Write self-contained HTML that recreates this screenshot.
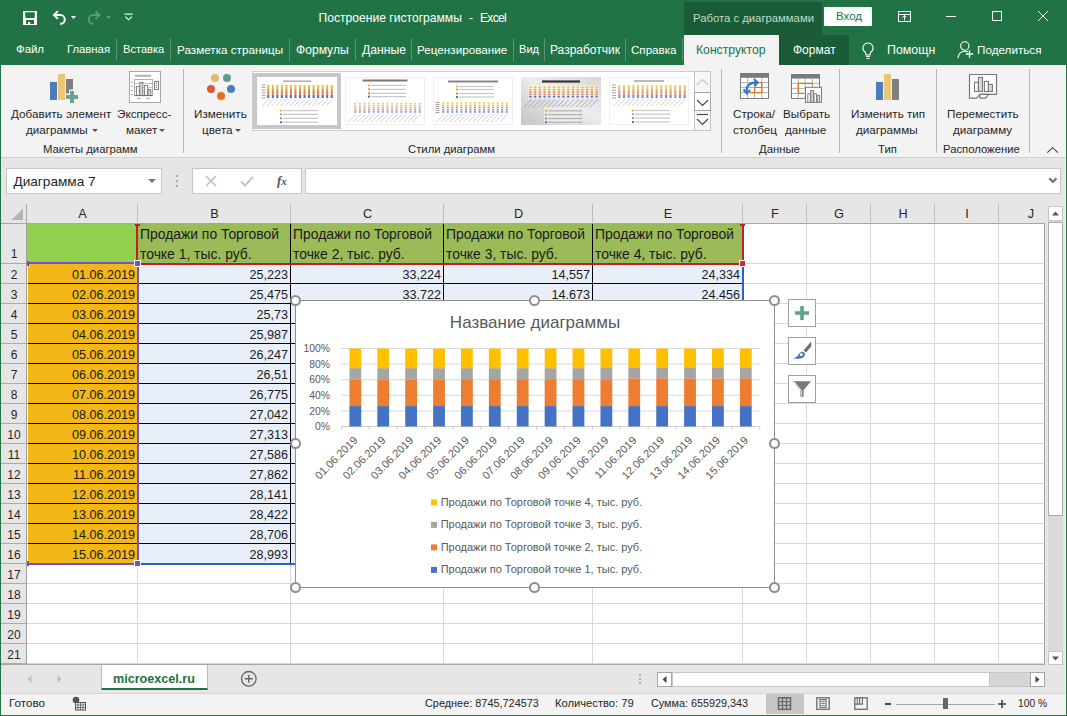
<!DOCTYPE html>
<html><head><meta charset="utf-8">
<style>
*{margin:0;padding:0;box-sizing:border-box}
html,body{width:1067px;height:716px;overflow:hidden;background:#e6e6e6;font-family:"Liberation Sans",sans-serif;position:relative}
.a{position:absolute}
.t{position:absolute;white-space:pre;line-height:1}
.tab{color:#fff;font-size:11.7px;top:44px}
.sep{position:absolute;top:38px;width:1px;height:23px;background:#5a9573}
.rl{font-size:11.7px;color:#262626}
.gl{font-size:11.3px;color:#262626;top:143.5px}
.vsep{position:absolute;top:69px;width:1px;height:84px;background:#b9b9b9}
.dd{position:absolute;width:0;height:0;border-left:3px solid transparent;border-right:3px solid transparent;border-top:3px solid #555}
</style></head><body>
<!-- ===== title bar ===== -->
<div class="a" style="left:0;top:0;width:1067px;height:65px;background:#217346"></div>
<div class="a" style="left:684px;top:2px;width:138px;height:33px;background:#1a5c37"></div>
<div class="t" style="left:318.6px;top:12px;font-size:12.1px;color:#fff">Построение гистограммы</div><div class="t" style="left:469px;top:12px;font-size:12.1px;color:#fff">-</div><div class="t" style="left:480px;top:12px;font-size:12.1px;letter-spacing:-0.7px;color:#fff">Excel</div>
<div class="t" style="left:693px;top:13px;font-size:11.3px;color:#c0dac9">Работа с диаграммами</div>
<div class="a" style="left:824px;top:7px;width:48px;height:19px;background:#fff;border-radius:1px"></div>
<div class="t" style="left:836px;top:11px;font-size:11.5px;color:#217346">Вход</div>
<!-- qat icons -->
<svg class="a" style="left:20px;top:8px" width="120" height="20" viewBox="0 0 120 20">
 <path fill-rule="evenodd" fill="#fff" d="M3 3h14v14H3z M5.2 4.2h9.6v5l-0.7 0.7h-8.2l-0.7-0.7z M6 12h8v3.9h-3.9v-1.9h-2v1.9H6z"/>
 <g fill="none" stroke="#fff" stroke-width="2"><path d="M34 7.1H40.5a4.3 4.3 0 0 1 0 8.6h-0.4"/><path d="M37.9 3.3L34 7.1l3.9 3.8"/></g>
 <path d="M51 8.1h5l-2.5 2.9z" fill="#fff"/>
 <g fill="none" stroke="#5c9874" stroke-width="2"><path d="M79.5 7.1H73a4.3 4.3 0 0 0 0 8.6h0.4"/><path d="M75.6 3.3L79.5 7.1l-3.9 3.8"/></g>
 <path d="M86 8.1h5l-2.5 2.9z" fill="#5c9874"/>
 <path d="M104.5 6.1h8.2" stroke="#fff" stroke-width="1.1"/><path d="M105.3 8.6l3.3 3.2 3.3-3.2" fill="none" stroke="#fff" stroke-width="1.1"/>
</svg>
<!-- window buttons -->
<svg class="a" style="left:890px;top:6px" width="170" height="22" viewBox="0 0 170 22">
 <g fill="none" stroke="#fff" stroke-width="1">
  <rect x="8.5" y="5.5" width="12" height="10"/><path d="M8.5 8.5h12"/><path d="M14.5 14.5v-5M12.5 11.5l2-2 2 2"/>
  <path d="M56 10.5h10"/>
  <rect x="102.5" y="5.5" width="9" height="9"/>
  <path d="M148 5l10 10M158 5l-10 10"/>
 </g>
</svg>
<!-- ===== tabs ===== -->
<div class="t tab" style="left:16px;font-size:11.4px">Файл</div>
<div class="t tab" style="left:67px;font-size:11.3px">Главная</div>
<div class="sep" style="left:116px"></div>
<div class="t tab" style="left:123px;font-size:11.1px">Вставка</div>
<div class="sep" style="left:170px"></div>
<div class="t tab" style="left:177px;font-size:11.7px">Разметка страницы</div>
<div class="sep" style="left:289px"></div>
<div class="t tab" style="left:296px;font-size:12.1px">Формулы</div>
<div class="sep" style="left:355px"></div>
<div class="t tab" style="left:362px;font-size:12.2px">Данные</div>
<div class="sep" style="left:411px"></div>
<div class="t tab" style="left:417px;font-size:11.7px">Рецензирование</div>
<div class="sep" style="left:513px"></div>
<div class="t tab" style="left:519px;font-size:11.1px">Вид</div>
<div class="sep" style="left:544px"></div>
<div class="t tab" style="left:550px;font-size:12px">Разработчик</div>
<div class="sep" style="left:625px"></div>
<div class="t tab" style="left:631px;font-size:11.6px">Справка</div>
<div class="sep" style="left:682px"></div>
<div class="a" style="left:684px;top:35px;width:95px;height:30px;background:#f3f3f3"></div>
<div class="t tab" style="left:696px;color:#217346;font-size:12.2px;top:43.5px">Конструктор</div>
<div class="a" style="left:779px;top:35px;width:70px;height:30px;background:#1a5c37"></div>
<div class="t tab" style="left:793px;font-size:12px">Формат</div>
<svg class="a" style="left:860px;top:41px" width="16" height="20" viewBox="0 0 16 20"><g fill="none" stroke="#fff" stroke-width="1.1"><path d="M8 2a5 5 0 0 0-3 9c1 1 1 2 1 3h4c0-1 0-2 1-3a5 5 0 0 0-3-9z"/><path d="M6 15.5h4M6.5 17.5h3"/></g></svg>
<div class="t tab" style="left:887px;font-size:12.4px;top:43.5px">Помощн</div>
<svg class="a" style="left:956px;top:41px" width="20" height="20" viewBox="0 0 20 20"><g fill="none" stroke="#fff" stroke-width="1.1"><circle cx="8.8" cy="5" r="4.2"/><path d="M2 17c0.5-4 3-6.8 7-6.8 1.2 0 2.2.2 3 .6"/><path d="M13.5 9.3v7.4M9.8 13h7.4" stroke-width="1.3"/></g></svg>
<div class="t tab" style="left:977px">Поделиться</div>

<!--GRID-->
<div class="a" style="left:1px;top:158px;width:1064px;height:507px;background:#e6e6e6"></div>
<div class="a" style="left:6px;top:168px;width:156px;height:26px;background:#fff;border:1px solid #c6c6c6"></div>
<div class="t" style="left:13.5px;top:175px;font-size:13.6px;color:#262626">Диаграмма 7</div>
<div class="dd" style="left:148px;top:179px;border-left-width:4px;border-right-width:4px;border-top:4px solid #777"></div>
<svg class="a" style="left:175px;top:174px" width="5" height="14"><circle cx="2" cy="2" r="1.1" fill="#9a9a9a"/><circle cx="2" cy="7" r="1.1" fill="#9a9a9a"/><circle cx="2" cy="12" r="1.1" fill="#9a9a9a"/></svg>
<div class="a" style="left:192px;top:168px;width:110px;height:26px;background:#fff;border:1px solid #c6c6c6"></div>
<svg class="a" style="left:200px;top:172px" width="100" height="18" viewBox="0 0 100 18"><path d="M6 4l10 10M16 4L6 14" stroke="#b8b8b8" stroke-width="1.4"/><path d="M41 9.5l4 4 8-8.5" fill="none" stroke="#c4c4c4" stroke-width="2"/></svg>
<div class="t" style="left:277px;top:174px;font-size:13px;font-family:'Liberation Serif';font-style:italic;font-weight:bold;color:#555">f<span style="font-size:11px">x</span></div>
<div class="a" style="left:305px;top:168px;width:756px;height:26px;background:#fff;border:1px solid #c6c6c6"></div>
<svg class="a" style="left:1048px;top:177px" width="10" height="7"><path d="M1.3 1.3l3.6 3.6 3.6-3.6" fill="none" stroke="#6a6a6a" stroke-width="2"/></svg>
<div class="a" style="left:1px;top:204px;width:1044px;height:20px;background:#e6e6e6;border-bottom:1px solid #a6a6a6"></div>
<div class="a" style="left:1px;top:224px;width:26px;height:441px;background:#e6e6e6;border-right:1px solid #9f9f9f"></div>
<svg class="a" style="left:11px;top:208px" width="13" height="13"><path d="M12 0.5V12H0.5z" fill="#b4b4b4"/></svg>
<div class="a" style="left:26px;top:204px;width:1px;height:20px;background:#a6a6a6"></div>
<div class="t" style="left:27px;top:208px;width:111px;text-align:center;font-size:12.7px;color:#262626">A</div>
<div class="a" style="left:137px;top:204px;width:1px;height:19px;background:#bdbdbd"></div>
<div class="t" style="left:138px;top:208px;width:153px;text-align:center;font-size:12.7px;color:#262626">B</div>
<div class="a" style="left:290px;top:204px;width:1px;height:19px;background:#bdbdbd"></div>
<div class="t" style="left:291px;top:208px;width:153px;text-align:center;font-size:12.7px;color:#262626">C</div>
<div class="a" style="left:443px;top:204px;width:1px;height:19px;background:#bdbdbd"></div>
<div class="t" style="left:444px;top:208px;width:149px;text-align:center;font-size:12.7px;color:#262626">D</div>
<div class="a" style="left:592px;top:204px;width:1px;height:19px;background:#bdbdbd"></div>
<div class="t" style="left:593px;top:208px;width:150px;text-align:center;font-size:12.7px;color:#262626">E</div>
<div class="a" style="left:742px;top:204px;width:1px;height:19px;background:#bdbdbd"></div>
<div class="t" style="left:743px;top:208px;width:64px;text-align:center;font-size:12.7px;color:#262626">F</div>
<div class="a" style="left:806px;top:204px;width:1px;height:19px;background:#bdbdbd"></div>
<div class="t" style="left:807px;top:208px;width:64px;text-align:center;font-size:12.7px;color:#262626">G</div>
<div class="a" style="left:870px;top:204px;width:1px;height:19px;background:#bdbdbd"></div>
<div class="t" style="left:871px;top:208px;width:64px;text-align:center;font-size:12.7px;color:#262626">H</div>
<div class="a" style="left:934px;top:204px;width:1px;height:19px;background:#bdbdbd"></div>
<div class="t" style="left:935px;top:208px;width:64px;text-align:center;font-size:12.7px;color:#262626">I</div>
<div class="a" style="left:998px;top:204px;width:1px;height:19px;background:#bdbdbd"></div>
<div class="t" style="left:999px;top:208px;width:64px;text-align:center;font-size:12.7px;color:#262626">J</div>
<div class="a" style="left:27px;top:224px;width:1018px;height:441px;background:#fff"></div>
<div class="a" style="left:27px;top:263px;width:1018px;height:1px;background:#d9d9d9"></div>
<div class="a" style="left:27px;top:283px;width:1018px;height:1px;background:#d9d9d9"></div>
<div class="a" style="left:27px;top:303px;width:1018px;height:1px;background:#d9d9d9"></div>
<div class="a" style="left:27px;top:323px;width:1018px;height:1px;background:#d9d9d9"></div>
<div class="a" style="left:27px;top:343px;width:1018px;height:1px;background:#d9d9d9"></div>
<div class="a" style="left:27px;top:363px;width:1018px;height:1px;background:#d9d9d9"></div>
<div class="a" style="left:27px;top:383px;width:1018px;height:1px;background:#d9d9d9"></div>
<div class="a" style="left:27px;top:403px;width:1018px;height:1px;background:#d9d9d9"></div>
<div class="a" style="left:27px;top:423px;width:1018px;height:1px;background:#d9d9d9"></div>
<div class="a" style="left:27px;top:443px;width:1018px;height:1px;background:#d9d9d9"></div>
<div class="a" style="left:27px;top:463px;width:1018px;height:1px;background:#d9d9d9"></div>
<div class="a" style="left:27px;top:483px;width:1018px;height:1px;background:#d9d9d9"></div>
<div class="a" style="left:27px;top:503px;width:1018px;height:1px;background:#d9d9d9"></div>
<div class="a" style="left:27px;top:523px;width:1018px;height:1px;background:#d9d9d9"></div>
<div class="a" style="left:27px;top:543px;width:1018px;height:1px;background:#d9d9d9"></div>
<div class="a" style="left:27px;top:563px;width:1018px;height:1px;background:#d9d9d9"></div>
<div class="a" style="left:27px;top:583px;width:1018px;height:1px;background:#d9d9d9"></div>
<div class="a" style="left:27px;top:603px;width:1018px;height:1px;background:#d9d9d9"></div>
<div class="a" style="left:27px;top:623px;width:1018px;height:1px;background:#d9d9d9"></div>
<div class="a" style="left:27px;top:643px;width:1018px;height:1px;background:#d9d9d9"></div>
<div class="a" style="left:27px;top:663px;width:1018px;height:1px;background:#d9d9d9"></div>
<div class="a" style="left:137px;top:224px;width:1px;height:441px;background:#d9d9d9"></div>
<div class="a" style="left:290px;top:224px;width:1px;height:441px;background:#d9d9d9"></div>
<div class="a" style="left:443px;top:224px;width:1px;height:441px;background:#d9d9d9"></div>
<div class="a" style="left:592px;top:224px;width:1px;height:441px;background:#d9d9d9"></div>
<div class="a" style="left:742px;top:224px;width:1px;height:441px;background:#d9d9d9"></div>
<div class="a" style="left:806px;top:224px;width:1px;height:441px;background:#d9d9d9"></div>
<div class="a" style="left:870px;top:224px;width:1px;height:441px;background:#d9d9d9"></div>
<div class="a" style="left:934px;top:224px;width:1px;height:441px;background:#d9d9d9"></div>
<div class="a" style="left:998px;top:224px;width:1px;height:441px;background:#d9d9d9"></div>
<div class="a" style="left:1044px;top:224px;width:1px;height:441px;background:#a6a6a6"></div>
<div class="a" style="left:1px;top:263px;width:25px;height:1px;background:#ababab"></div>
<div class="t" style="left:1px;top:248px;width:26px;text-align:center;font-size:12px;color:#262626">1</div>
<div class="a" style="left:1px;top:283px;width:25px;height:1px;background:#ababab"></div>
<div class="t" style="left:1px;top:269px;width:26px;text-align:center;font-size:12px;color:#262626">2</div>
<div class="a" style="left:1px;top:303px;width:25px;height:1px;background:#ababab"></div>
<div class="t" style="left:1px;top:289px;width:26px;text-align:center;font-size:12px;color:#262626">3</div>
<div class="a" style="left:1px;top:323px;width:25px;height:1px;background:#ababab"></div>
<div class="t" style="left:1px;top:309px;width:26px;text-align:center;font-size:12px;color:#262626">4</div>
<div class="a" style="left:1px;top:343px;width:25px;height:1px;background:#ababab"></div>
<div class="t" style="left:1px;top:329px;width:26px;text-align:center;font-size:12px;color:#262626">5</div>
<div class="a" style="left:1px;top:363px;width:25px;height:1px;background:#ababab"></div>
<div class="t" style="left:1px;top:349px;width:26px;text-align:center;font-size:12px;color:#262626">6</div>
<div class="a" style="left:1px;top:383px;width:25px;height:1px;background:#ababab"></div>
<div class="t" style="left:1px;top:369px;width:26px;text-align:center;font-size:12px;color:#262626">7</div>
<div class="a" style="left:1px;top:403px;width:25px;height:1px;background:#ababab"></div>
<div class="t" style="left:1px;top:389px;width:26px;text-align:center;font-size:12px;color:#262626">8</div>
<div class="a" style="left:1px;top:423px;width:25px;height:1px;background:#ababab"></div>
<div class="t" style="left:1px;top:409px;width:26px;text-align:center;font-size:12px;color:#262626">9</div>
<div class="a" style="left:1px;top:443px;width:25px;height:1px;background:#ababab"></div>
<div class="t" style="left:1px;top:429px;width:26px;text-align:center;font-size:12px;color:#262626">10</div>
<div class="a" style="left:1px;top:463px;width:25px;height:1px;background:#ababab"></div>
<div class="t" style="left:1px;top:449px;width:26px;text-align:center;font-size:12px;color:#262626">11</div>
<div class="a" style="left:1px;top:483px;width:25px;height:1px;background:#ababab"></div>
<div class="t" style="left:1px;top:469px;width:26px;text-align:center;font-size:12px;color:#262626">12</div>
<div class="a" style="left:1px;top:503px;width:25px;height:1px;background:#ababab"></div>
<div class="t" style="left:1px;top:489px;width:26px;text-align:center;font-size:12px;color:#262626">13</div>
<div class="a" style="left:1px;top:523px;width:25px;height:1px;background:#ababab"></div>
<div class="t" style="left:1px;top:509px;width:26px;text-align:center;font-size:12px;color:#262626">14</div>
<div class="a" style="left:1px;top:543px;width:25px;height:1px;background:#ababab"></div>
<div class="t" style="left:1px;top:529px;width:26px;text-align:center;font-size:12px;color:#262626">15</div>
<div class="a" style="left:1px;top:563px;width:25px;height:1px;background:#ababab"></div>
<div class="t" style="left:1px;top:549px;width:26px;text-align:center;font-size:12px;color:#262626">16</div>
<div class="a" style="left:1px;top:583px;width:25px;height:1px;background:#ababab"></div>
<div class="t" style="left:1px;top:569px;width:26px;text-align:center;font-size:12px;color:#262626">17</div>
<div class="a" style="left:1px;top:603px;width:25px;height:1px;background:#ababab"></div>
<div class="t" style="left:1px;top:589px;width:26px;text-align:center;font-size:12px;color:#262626">18</div>
<div class="a" style="left:1px;top:623px;width:25px;height:1px;background:#ababab"></div>
<div class="t" style="left:1px;top:609px;width:26px;text-align:center;font-size:12px;color:#262626">19</div>
<div class="a" style="left:1px;top:643px;width:25px;height:1px;background:#ababab"></div>
<div class="t" style="left:1px;top:629px;width:26px;text-align:center;font-size:12px;color:#262626">20</div>
<div class="a" style="left:1px;top:663px;width:25px;height:1px;background:#ababab"></div>
<div class="t" style="left:1px;top:649px;width:26px;text-align:center;font-size:12px;color:#262626">21</div>
<div class="a" style="left:1px;top:664px;width:1064px;height:1px;background:#a6a6a6"></div>
<div class="a" style="left:27px;top:224px;width:110px;height:40px;background:#92d050"></div>
<div class="a" style="left:138px;top:224px;width:604px;height:40px;background:#9bbb59"></div>
<div class="a" style="left:28px;top:264px;width:109px;height:300px;background:#f4b718"></div>
<div class="a" style="left:138px;top:264px;width:604px;height:300px;background:#e9eff8"></div>
<div class="a" style="left:290px;top:224px;width:1px;height:340px;background:#000"></div>
<div class="a" style="left:443px;top:224px;width:1px;height:340px;background:#000"></div>
<div class="a" style="left:592px;top:224px;width:1px;height:340px;background:#000"></div>
<div class="a" style="left:28px;top:283px;width:715px;height:1px;background:#000"></div>
<div class="a" style="left:28px;top:303px;width:715px;height:1px;background:#000"></div>
<div class="a" style="left:28px;top:323px;width:715px;height:1px;background:#000"></div>
<div class="a" style="left:28px;top:343px;width:715px;height:1px;background:#000"></div>
<div class="a" style="left:28px;top:363px;width:715px;height:1px;background:#000"></div>
<div class="a" style="left:28px;top:383px;width:715px;height:1px;background:#000"></div>
<div class="a" style="left:28px;top:403px;width:715px;height:1px;background:#000"></div>
<div class="a" style="left:28px;top:423px;width:715px;height:1px;background:#000"></div>
<div class="a" style="left:28px;top:443px;width:715px;height:1px;background:#000"></div>
<div class="a" style="left:28px;top:463px;width:715px;height:1px;background:#000"></div>
<div class="a" style="left:28px;top:483px;width:715px;height:1px;background:#000"></div>
<div class="a" style="left:28px;top:503px;width:715px;height:1px;background:#000"></div>
<div class="a" style="left:28px;top:523px;width:715px;height:1px;background:#000"></div>
<div class="a" style="left:28px;top:543px;width:715px;height:1px;background:#000"></div>
<div class="t" style="left:140px;top:225px;font-size:13.9px;color:#1a1a1a;line-height:19.6px">Продажи по Торговой<br>точке 1, тыс. руб.</div>
<div class="t" style="left:293px;top:225px;font-size:13.9px;color:#1a1a1a;line-height:19.6px">Продажи по Торговой<br>точке 2, тыс. руб.</div>
<div class="t" style="left:446px;top:225px;font-size:13.9px;color:#1a1a1a;line-height:19.6px">Продажи по Торговой<br>точке 3, тыс. руб.</div>
<div class="t" style="left:595px;top:225px;font-size:13.9px;color:#1a1a1a;line-height:19.6px">Продажи по Торговой<br>точке 4, тыс. руб.</div>
<div class="t" style="left:27px;top:269px;width:108px;text-align:right;font-size:12.6px;color:#1a1a1a">01.06.2019</div>
<div class="t" style="left:138px;top:269px;width:150px;text-align:right;font-size:12.6px;color:#1a1a1a">25,223</div>
<div class="t" style="left:27px;top:289px;width:108px;text-align:right;font-size:12.6px;color:#1a1a1a">02.06.2019</div>
<div class="t" style="left:138px;top:289px;width:150px;text-align:right;font-size:12.6px;color:#1a1a1a">25,475</div>
<div class="t" style="left:27px;top:309px;width:108px;text-align:right;font-size:12.6px;color:#1a1a1a">03.06.2019</div>
<div class="t" style="left:138px;top:309px;width:150px;text-align:right;font-size:12.6px;color:#1a1a1a">25,73</div>
<div class="t" style="left:27px;top:329px;width:108px;text-align:right;font-size:12.6px;color:#1a1a1a">04.06.2019</div>
<div class="t" style="left:138px;top:329px;width:150px;text-align:right;font-size:12.6px;color:#1a1a1a">25,987</div>
<div class="t" style="left:27px;top:349px;width:108px;text-align:right;font-size:12.6px;color:#1a1a1a">05.06.2019</div>
<div class="t" style="left:138px;top:349px;width:150px;text-align:right;font-size:12.6px;color:#1a1a1a">26,247</div>
<div class="t" style="left:27px;top:369px;width:108px;text-align:right;font-size:12.6px;color:#1a1a1a">06.06.2019</div>
<div class="t" style="left:138px;top:369px;width:150px;text-align:right;font-size:12.6px;color:#1a1a1a">26,51</div>
<div class="t" style="left:27px;top:389px;width:108px;text-align:right;font-size:12.6px;color:#1a1a1a">07.06.2019</div>
<div class="t" style="left:138px;top:389px;width:150px;text-align:right;font-size:12.6px;color:#1a1a1a">26,775</div>
<div class="t" style="left:27px;top:409px;width:108px;text-align:right;font-size:12.6px;color:#1a1a1a">08.06.2019</div>
<div class="t" style="left:138px;top:409px;width:150px;text-align:right;font-size:12.6px;color:#1a1a1a">27,042</div>
<div class="t" style="left:27px;top:429px;width:108px;text-align:right;font-size:12.6px;color:#1a1a1a">09.06.2019</div>
<div class="t" style="left:138px;top:429px;width:150px;text-align:right;font-size:12.6px;color:#1a1a1a">27,313</div>
<div class="t" style="left:27px;top:449px;width:108px;text-align:right;font-size:12.6px;color:#1a1a1a">10.06.2019</div>
<div class="t" style="left:138px;top:449px;width:150px;text-align:right;font-size:12.6px;color:#1a1a1a">27,586</div>
<div class="t" style="left:27px;top:469px;width:108px;text-align:right;font-size:12.6px;color:#1a1a1a">11.06.2019</div>
<div class="t" style="left:138px;top:469px;width:150px;text-align:right;font-size:12.6px;color:#1a1a1a">27,862</div>
<div class="t" style="left:27px;top:489px;width:108px;text-align:right;font-size:12.6px;color:#1a1a1a">12.06.2019</div>
<div class="t" style="left:138px;top:489px;width:150px;text-align:right;font-size:12.6px;color:#1a1a1a">28,141</div>
<div class="t" style="left:27px;top:509px;width:108px;text-align:right;font-size:12.6px;color:#1a1a1a">13.06.2019</div>
<div class="t" style="left:138px;top:509px;width:150px;text-align:right;font-size:12.6px;color:#1a1a1a">28,422</div>
<div class="t" style="left:27px;top:529px;width:108px;text-align:right;font-size:12.6px;color:#1a1a1a">14.06.2019</div>
<div class="t" style="left:138px;top:529px;width:150px;text-align:right;font-size:12.6px;color:#1a1a1a">28,706</div>
<div class="t" style="left:27px;top:549px;width:108px;text-align:right;font-size:12.6px;color:#1a1a1a">15.06.2019</div>
<div class="t" style="left:138px;top:549px;width:150px;text-align:right;font-size:12.6px;color:#1a1a1a">28,993</div>
<div class="t" style="left:291px;top:269px;width:150px;text-align:right;font-size:12.6px;color:#1a1a1a">33,224</div>
<div class="t" style="left:444px;top:269px;width:146px;text-align:right;font-size:12.6px;color:#1a1a1a">14,557</div>
<div class="t" style="left:593px;top:269px;width:147px;text-align:right;font-size:12.6px;color:#1a1a1a">24,334</div>
<div class="t" style="left:291px;top:289px;width:150px;text-align:right;font-size:12.6px;color:#1a1a1a">33.722</div>
<div class="t" style="left:444px;top:289px;width:146px;text-align:right;font-size:12.6px;color:#1a1a1a">14.673</div>
<div class="t" style="left:593px;top:289px;width:147px;text-align:right;font-size:12.6px;color:#1a1a1a">24.456</div>
<div class="a" style="left:136px;top:226px;width:2px;height:37px;background:#c0202c"></div>
<div class="a" style="left:742px;top:226px;width:2px;height:37px;background:#c0202c"></div>
<div class="a" style="left:140px;top:263px;width:600px;height:2px;background:#c0202c"></div>
<div class="a" style="left:740px;top:224px;width:5px;height:2px;background:#c0202c"></div>
<div class="a" style="left:135px;top:224px;width:5px;height:2px;background:#c0202c"></div>
<div class="a" style="left:739px;top:260px;width:7px;height:7px;background:#c8303c;border:1px solid #fff"></div>
<div class="a" style="left:29px;top:262px;width:106px;height:2px;background:#7a4ec2"></div>
<div class="a" style="left:29px;top:563px;width:106px;height:2px;background:#7a4ec2"></div>
<div class="a" style="left:137px;top:267px;width:2px;height:293px;background:#7a4ec2"></div>
<div class="a" style="left:27px;top:261px;width:2px;height:5px;background:#7a4ec2"></div>
<div class="a" style="left:27px;top:561px;width:2px;height:5px;background:#7a4ec2"></div>
<div class="a" style="left:134px;top:260px;width:7px;height:7px;background:#7a4ec2;border:1px solid #fff"></div>
<div class="a" style="left:134px;top:560px;width:7px;height:7px;background:#7a4ec2;border:1px solid #fff"></div>
<div class="a" style="left:742px;top:267px;width:2px;height:297px;background:#2a62c8"></div>
<div class="a" style="left:141px;top:563px;width:603px;height:2px;background:#2a62c8"></div>
<div class="a" style="left:1045px;top:204px;width:20px;height:461px;background:#e6e6e6"></div>
<div class="a" style="left:1048px;top:221px;width:15px;height:431px;background:#dadada"></div>
<div class="a" style="left:1048px;top:206px;width:15px;height:15px;background:#fff;border:1px solid #c6c6c6"></div>
<svg class="a" style="left:1048px;top:206px" width="15" height="15"><path d="M4 9.5h7l-3.5-4z" fill="#555"/></svg>
<div class="a" style="left:1048px;top:222px;width:15px;height:294px;background:#fff;border:1px solid #ababab"></div>
<div class="a" style="left:1048px;top:651px;width:15px;height:14px;background:#fff;border:1px solid #c6c6c6"></div>
<svg class="a" style="left:1048px;top:651px" width="15" height="14"><path d="M4 5.5h7l-3.5 4z" fill="#555"/></svg>
<!--/GRID-->
<!--BOTTOM-->
<!-- ===== sheet tabs / status ===== -->
<div class="a" style="left:1px;top:665px;width:1064px;height:28px;background:#e6e6e6"></div>
<svg class="a" style="left:20px;top:672px" width="50" height="14"><path d="M11.5 3v8l-4-4z" fill="#c0c0c0"/><path d="M37.5 3v8l4-4z" fill="#c0c0c0"/></svg>
<div class="a" style="left:101px;top:665px;width:107px;height:25px;background:#fff;border-left:1px solid #bdbdbd;border-right:1px solid #bdbdbd;border-bottom:2px solid #217346"></div>
<div class="t" style="left:113px;top:673px;font-size:12.6px;font-weight:bold;color:#217346">microexcel.ru</div>
<svg class="a" style="left:240px;top:670px" width="18" height="18"><circle cx="8.8" cy="8.8" r="7.3" fill="none" stroke="#666" stroke-width="1.3"/><path d="M8.8 4.8v8M4.8 8.8h8" stroke="#666" stroke-width="1.4"/></svg>
<svg class="a" style="left:637px;top:673px" width="6" height="12"><circle cx="3" cy="2" r="1" fill="#9a9a9a"/><circle cx="3" cy="6" r="1" fill="#9a9a9a"/><circle cx="3" cy="10" r="1" fill="#9a9a9a"/></svg>
<div class="a" style="left:657px;top:672px;width:388px;height:15px;background:#d6d6d6;border:1px solid #c6c6c6"></div>
<div class="a" style="left:657px;top:672px;width:15px;height:15px;background:#fff;border:1px solid #a6a6a6"></div>
<svg class="a" style="left:657px;top:672px" width="15" height="15"><path d="M9.5 4v7l-4-3.5z" fill="#444"/></svg>
<div class="a" style="left:672px;top:672px;width:318px;height:15px;background:#fff;border:1px solid #c6c6c6"></div>
<div class="a" style="left:1030px;top:672px;width:15px;height:15px;background:#fff;border:1px solid #a6a6a6"></div>
<svg class="a" style="left:1030px;top:672px" width="15" height="15"><path d="M5.5 4v7l4-3.5z" fill="#444"/></svg>
<div class="a" style="left:1px;top:693px;width:1065px;height:22px;background:#f3f3f3;border-top:1px solid #d6d6d6"></div>
<div class="t" style="left:9px;top:697px;font-size:11.7px;color:#262626">Готово</div>
<svg class="a" style="left:72px;top:696px" width="16" height="15" viewBox="0 0 16 15"><circle cx="4" cy="4" r="3.3" fill="#555"/><rect x="3.5" y="6.5" width="10" height="7.5" fill="#fff" stroke="#555"/><path d="M3.5 9h10M3.5 11.5h10M6 6.5v7.5M8.5 6.5v7.5M11 6.5v7.5" stroke="#555" stroke-width="0.8"/></svg>
<div class="t" style="left:425px;top:698px;font-size:10.9px;color:#262626">Среднее: 8745,724573</div>
<div class="t" style="left:555px;top:698px;font-size:11.2px;color:#262626">Количество: 79</div>
<div class="t" style="left:651px;top:698px;font-size:10.8px;color:#262626">Сумма: 655929,343</div>
<div class="a" style="left:766px;top:694px;width:38px;height:20px;background:#c6c6c6"></div>
<svg class="a" style="left:760px;top:690px" width="120" height="26" viewBox="0 0 120 26">
 <rect x="18.5" y="7.8" width="12" height="11.5" fill="none" stroke="#6a6a6a" stroke-width="1.6"/>
 <path d="M22.5 7.8v11.5M26.5 7.8v11.5M18.5 11.6h12M18.5 15.4h12" stroke="#6a6a6a" stroke-width="1.3"/>
 <rect x="56.8" y="7.8" width="12.4" height="11.5" fill="none" stroke="#6a6a6a" stroke-width="1.3"/>
 <rect x="60" y="9.6" width="6" height="7.8" fill="none" stroke="#6a6a6a" stroke-width="1.1"/>
 <path d="M61.3 11.6h3.4M61.3 13.5h3.4M61.3 15.4h3.4" stroke="#6a6a6a" stroke-width="0.9"/>
 <rect x="94.8" y="7.8" width="12.4" height="11.5" fill="none" stroke="#6a6a6a" stroke-width="1.3"/>
 <path d="M94.8 14.1h7.6V7.8M97.3 7.8v6.3M99.6 7.8v6.3" fill="none" stroke="#6a6a6a" stroke-width="1.1"/>
</svg>
<div class="a" style="left:885px;top:703px;width:6px;height:2px;background:#444"></div>
<div class="a" style="left:896px;top:704px;width:99px;height:1px;background:#a6a6a6"></div>
<div class="a" style="left:943px;top:698px;width:5px;height:11px;background:#666"></div>
<svg class="a" style="left:997px;top:699px" width="10" height="10"><path d="M5 1v8M1 5h8" stroke="#444" stroke-width="1.6"/></svg>
<div class="t" style="left:1018px;top:699px;font-size:10.3px;color:#262626">100 %</div>

<!--/BOTTOM-->
<!--CHART-->
<div class="a" style="left:295px;top:300px;width:480px;height:288px;background:#fff;border:1px solid #8f8f8f"></div>
<svg class="a" style="left:295px;top:300px;overflow:visible" width="480" height="288" viewBox="295 300 480 288" font-family="Liberation Sans">
<path d="M341.4 410.90H759.7" stroke="#d9d9d9" stroke-width="1"/>
<path d="M341.4 395.30H759.7" stroke="#d9d9d9" stroke-width="1"/>
<path d="M341.4 379.70H759.7" stroke="#d9d9d9" stroke-width="1"/>
<path d="M341.4 364.10H759.7" stroke="#d9d9d9" stroke-width="1"/>
<path d="M341.4 348.50H759.7" stroke="#d9d9d9" stroke-width="1"/>
<path d="M341.4 426.50H759.7" stroke="#d0d0d0" stroke-width="1"/>
<path d="M341.40 426.50V430" stroke="#d0d0d0" stroke-width="1"/>
<path d="M369.29 426.50V430" stroke="#d0d0d0" stroke-width="1"/>
<path d="M397.18 426.50V430" stroke="#d0d0d0" stroke-width="1"/>
<path d="M425.07 426.50V430" stroke="#d0d0d0" stroke-width="1"/>
<path d="M452.96 426.50V430" stroke="#d0d0d0" stroke-width="1"/>
<path d="M480.85 426.50V430" stroke="#d0d0d0" stroke-width="1"/>
<path d="M508.74 426.50V430" stroke="#d0d0d0" stroke-width="1"/>
<path d="M536.63 426.50V430" stroke="#d0d0d0" stroke-width="1"/>
<path d="M564.52 426.50V430" stroke="#d0d0d0" stroke-width="1"/>
<path d="M592.41 426.50V430" stroke="#d0d0d0" stroke-width="1"/>
<path d="M620.30 426.50V430" stroke="#d0d0d0" stroke-width="1"/>
<path d="M648.19 426.50V430" stroke="#d0d0d0" stroke-width="1"/>
<path d="M676.08 426.50V430" stroke="#d0d0d0" stroke-width="1"/>
<path d="M703.97 426.50V430" stroke="#d0d0d0" stroke-width="1"/>
<path d="M731.86 426.50V430" stroke="#d0d0d0" stroke-width="1"/>
<path d="M759.75 426.50V430" stroke="#d0d0d0" stroke-width="1"/>
<text x="330" y="430.20" text-anchor="end" font-size="10.4" fill="#595959">0%</text>
<text x="330" y="414.60" text-anchor="end" font-size="10.4" fill="#595959">20%</text>
<text x="330" y="399.00" text-anchor="end" font-size="10.4" fill="#595959">40%</text>
<text x="330" y="383.40" text-anchor="end" font-size="10.4" fill="#595959">60%</text>
<text x="330" y="367.80" text-anchor="end" font-size="10.4" fill="#595959">80%</text>
<text x="330" y="352.20" text-anchor="end" font-size="10.4" fill="#595959">100%</text>
<rect x="349.44" y="406.06" width="11.80" height="20.44" fill="#4472c4"/>
<rect x="349.44" y="379.86" width="11.80" height="26.21" fill="#ed7d31"/>
<rect x="349.44" y="368.16" width="11.80" height="11.70" fill="#a5a5a5"/>
<rect x="349.44" y="348.50" width="11.80" height="19.66" fill="#ffc000"/>
<text transform="translate(358.34 441) rotate(-45)" text-anchor="end" font-size="11" fill="#595959">01.06.2019</text>
<rect x="377.33" y="406.06" width="11.80" height="20.44" fill="#4472c4"/>
<rect x="377.33" y="379.86" width="11.80" height="26.21" fill="#ed7d31"/>
<rect x="377.33" y="368.16" width="11.80" height="11.70" fill="#a5a5a5"/>
<rect x="377.33" y="348.50" width="11.80" height="19.66" fill="#ffc000"/>
<text transform="translate(386.23 441) rotate(-45)" text-anchor="end" font-size="11" fill="#595959">02.06.2019</text>
<rect x="405.23" y="406.06" width="11.80" height="20.44" fill="#4472c4"/>
<rect x="405.23" y="379.86" width="11.80" height="26.21" fill="#ed7d31"/>
<rect x="405.23" y="368.16" width="11.80" height="11.70" fill="#a5a5a5"/>
<rect x="405.23" y="348.50" width="11.80" height="19.66" fill="#ffc000"/>
<text transform="translate(414.12 441) rotate(-45)" text-anchor="end" font-size="11" fill="#595959">03.06.2019</text>
<rect x="433.12" y="406.06" width="11.80" height="20.44" fill="#4472c4"/>
<rect x="433.12" y="379.86" width="11.80" height="26.21" fill="#ed7d31"/>
<rect x="433.12" y="368.16" width="11.80" height="11.70" fill="#a5a5a5"/>
<rect x="433.12" y="348.50" width="11.80" height="19.66" fill="#ffc000"/>
<text transform="translate(442.01 441) rotate(-45)" text-anchor="end" font-size="11" fill="#595959">04.06.2019</text>
<rect x="461.00" y="406.06" width="11.80" height="20.44" fill="#4472c4"/>
<rect x="461.00" y="379.23" width="11.80" height="26.83" fill="#ed7d31"/>
<rect x="461.00" y="368.16" width="11.80" height="11.08" fill="#a5a5a5"/>
<rect x="461.00" y="348.50" width="11.80" height="19.66" fill="#ffc000"/>
<text transform="translate(469.90 441) rotate(-45)" text-anchor="end" font-size="11" fill="#595959">05.06.2019</text>
<rect x="488.89" y="406.06" width="11.80" height="20.44" fill="#4472c4"/>
<rect x="488.89" y="379.23" width="11.80" height="26.83" fill="#ed7d31"/>
<rect x="488.89" y="368.16" width="11.80" height="11.08" fill="#a5a5a5"/>
<rect x="488.89" y="348.50" width="11.80" height="19.66" fill="#ffc000"/>
<text transform="translate(497.79 441) rotate(-45)" text-anchor="end" font-size="11" fill="#595959">06.06.2019</text>
<rect x="516.78" y="406.06" width="11.80" height="20.44" fill="#4472c4"/>
<rect x="516.78" y="379.23" width="11.80" height="26.83" fill="#ed7d31"/>
<rect x="516.78" y="368.16" width="11.80" height="11.08" fill="#a5a5a5"/>
<rect x="516.78" y="348.50" width="11.80" height="19.66" fill="#ffc000"/>
<text transform="translate(525.68 441) rotate(-45)" text-anchor="end" font-size="11" fill="#595959">07.06.2019</text>
<rect x="544.68" y="406.06" width="11.80" height="20.44" fill="#4472c4"/>
<rect x="544.68" y="379.23" width="11.80" height="26.83" fill="#ed7d31"/>
<rect x="544.68" y="368.16" width="11.80" height="11.08" fill="#a5a5a5"/>
<rect x="544.68" y="348.50" width="11.80" height="19.66" fill="#ffc000"/>
<text transform="translate(553.58 441) rotate(-45)" text-anchor="end" font-size="11" fill="#595959">08.06.2019</text>
<rect x="572.56" y="406.06" width="11.80" height="20.44" fill="#4472c4"/>
<rect x="572.56" y="379.23" width="11.80" height="26.83" fill="#ed7d31"/>
<rect x="572.56" y="368.16" width="11.80" height="11.08" fill="#a5a5a5"/>
<rect x="572.56" y="348.50" width="11.80" height="19.66" fill="#ffc000"/>
<text transform="translate(581.46 441) rotate(-45)" text-anchor="end" font-size="11" fill="#595959">09.06.2019</text>
<rect x="600.46" y="406.06" width="11.80" height="20.44" fill="#4472c4"/>
<rect x="600.46" y="379.23" width="11.80" height="26.83" fill="#ed7d31"/>
<rect x="600.46" y="367.22" width="11.80" height="12.01" fill="#a5a5a5"/>
<rect x="600.46" y="348.50" width="11.80" height="18.72" fill="#ffc000"/>
<text transform="translate(609.36 441) rotate(-45)" text-anchor="end" font-size="11" fill="#595959">10.06.2019</text>
<rect x="628.35" y="406.06" width="11.80" height="20.44" fill="#4472c4"/>
<rect x="628.35" y="378.30" width="11.80" height="27.77" fill="#ed7d31"/>
<rect x="628.35" y="367.22" width="11.80" height="11.08" fill="#a5a5a5"/>
<rect x="628.35" y="348.50" width="11.80" height="18.72" fill="#ffc000"/>
<text transform="translate(637.25 441) rotate(-45)" text-anchor="end" font-size="11" fill="#595959">11.06.2019</text>
<rect x="656.24" y="406.06" width="11.80" height="20.44" fill="#4472c4"/>
<rect x="656.24" y="378.30" width="11.80" height="27.77" fill="#ed7d31"/>
<rect x="656.24" y="367.22" width="11.80" height="11.08" fill="#a5a5a5"/>
<rect x="656.24" y="348.50" width="11.80" height="18.72" fill="#ffc000"/>
<text transform="translate(665.13 441) rotate(-45)" text-anchor="end" font-size="11" fill="#595959">12.06.2019</text>
<rect x="684.12" y="406.06" width="11.80" height="20.44" fill="#4472c4"/>
<rect x="684.12" y="378.30" width="11.80" height="27.77" fill="#ed7d31"/>
<rect x="684.12" y="367.22" width="11.80" height="11.08" fill="#a5a5a5"/>
<rect x="684.12" y="348.50" width="11.80" height="18.72" fill="#ffc000"/>
<text transform="translate(693.02 441) rotate(-45)" text-anchor="end" font-size="11" fill="#595959">13.06.2019</text>
<rect x="712.01" y="406.06" width="11.80" height="20.44" fill="#4472c4"/>
<rect x="712.01" y="378.30" width="11.80" height="27.77" fill="#ed7d31"/>
<rect x="712.01" y="367.22" width="11.80" height="11.08" fill="#a5a5a5"/>
<rect x="712.01" y="348.50" width="11.80" height="18.72" fill="#ffc000"/>
<text transform="translate(720.91 441) rotate(-45)" text-anchor="end" font-size="11" fill="#595959">14.06.2019</text>
<rect x="739.91" y="406.06" width="11.80" height="20.44" fill="#4472c4"/>
<rect x="739.91" y="378.30" width="11.80" height="27.77" fill="#ed7d31"/>
<rect x="739.91" y="367.22" width="11.80" height="11.08" fill="#a5a5a5"/>
<rect x="739.91" y="348.50" width="11.80" height="18.72" fill="#ffc000"/>
<text transform="translate(748.81 441) rotate(-45)" text-anchor="end" font-size="11" fill="#595959">15.06.2019</text>
<text x="535" y="328.2" text-anchor="middle" font-size="17" fill="#595959">Название диаграммы</text>
<rect x="431" y="499.4" width="6" height="6" fill="#ffc000"/>
<text x="440.7" y="505.7" font-size="11" fill="#595959">Продажи по Торговой точке 4, тыс. руб.</text>
<rect x="431" y="521.9" width="6" height="6" fill="#a5a5a5"/>
<text x="440.7" y="528.2" font-size="11" fill="#595959">Продажи по Торговой точке 3, тыс. руб.</text>
<rect x="431" y="544.4" width="6" height="6" fill="#ed7d31"/>
<text x="440.7" y="550.7" font-size="11" fill="#595959">Продажи по Торговой точке 2, тыс. руб.</text>
<rect x="431" y="566.9" width="6" height="6" fill="#4472c4"/>
<text x="440.7" y="573.2" font-size="11" fill="#595959">Продажи по Торговой точке 1, тыс. руб.</text>
</svg>
<div class="a" style="left:290.0px;top:295.0px;width:11px;height:11px;border-radius:50%;background:#fff;border:2px solid #8f8f8f"></div>
<div class="a" style="left:529.0px;top:295.0px;width:11px;height:11px;border-radius:50%;background:#fff;border:2px solid #8f8f8f"></div>
<div class="a" style="left:769.0px;top:295.0px;width:11px;height:11px;border-radius:50%;background:#fff;border:2px solid #8f8f8f"></div>
<div class="a" style="left:290.0px;top:438.0px;width:11px;height:11px;border-radius:50%;background:#fff;border:2px solid #8f8f8f"></div>
<div class="a" style="left:769.0px;top:438.0px;width:11px;height:11px;border-radius:50%;background:#fff;border:2px solid #8f8f8f"></div>
<div class="a" style="left:290.0px;top:582.0px;width:11px;height:11px;border-radius:50%;background:#fff;border:2px solid #8f8f8f"></div>
<div class="a" style="left:529.0px;top:582.0px;width:11px;height:11px;border-radius:50%;background:#fff;border:2px solid #8f8f8f"></div>
<div class="a" style="left:769.0px;top:582.0px;width:11px;height:11px;border-radius:50%;background:#fff;border:2px solid #8f8f8f"></div>
<div class="a" style="left:788px;top:299px;width:28px;height:28px;background:#fff;border:1.5px solid #a0a0a0"></div>
<div class="a" style="left:788px;top:337px;width:28px;height:28px;background:#fff;border:1.5px solid #a0a0a0"></div>
<div class="a" style="left:788px;top:375px;width:28px;height:28px;background:#fff;border:1.5px solid #a0a0a0"></div>
<svg class="a" style="left:788px;top:299px" width="28" height="28"><path d="M14 7v14M7 14h14" stroke="#5da385" stroke-width="3.6"/></svg>
<svg class="a" style="left:788px;top:337px" width="28" height="28" viewBox="0 0 28 28"><path d="M23.2 4.6L15.6 13.2l2.6 2.3 5-6.2z" fill="#6d6d6d"/><path d="M5.3 21.6c3.2-0.9 4.8-3 5.8-5 1-1.8 3.4-2.6 4.9-1.3 1.5 1.3 1.2 3.6-0.4 4.9-1.8 1.4-5.6 1.7-10.3 1.4z" fill="#3f78c3"/><circle cx="13.3" cy="17.6" r="1.5" fill="#fff"/></svg>
<svg class="a" style="left:788px;top:375px" width="28" height="28" viewBox="0 0 28 28"><path d="M5 6.2h18l-7.4 9v6.5h-3.4v-6.5z" fill="#7a7a7a"/><path d="M6.2 6.9l7 8.6v5.8" fill="none" stroke="#fff" stroke-width="1"/></svg>
<!--/CHART-->
<!-- ===== ribbon ===== -->
<div class="a" style="left:1px;top:65px;width:1065px;height:93px;background:#f3f3f3;border-bottom:1px solid #d0d0d0"></div>
<div class="a" style="left:1065px;top:65px;width:1px;height:651px;background:#f3f3f3"></div><div class="a" style="left:1066px;top:65px;width:1px;height:651px;background:#217346"></div>
<div class="a" style="left:0;top:65px;width:1px;height:651px;background:#217346"></div>
<div class="a" style="left:0;top:715px;width:1067px;height:1px;background:#217346"></div>

<!-- group 1 -->
<svg class="a" style="left:48px;top:72px" width="34" height="34" viewBox="0 0 34 34">
 <rect x="2" y="10" width="7" height="18" fill="#4a7ebb"/>
 <rect x="10" y="2" width="7" height="26" fill="#ecc674"/>
 <rect x="18" y="7" width="7" height="15" fill="#7f7f7f"/>
 <path d="M24 17.5v14M17 24.5h14" stroke="#f3f3f3" stroke-width="6"/><path d="M24 19v12M18 25h12" stroke="#6aa58a" stroke-width="4"/>
</svg>
<div class="t rl" style="left:11px;top:108px">Добавить элемент</div>
<div class="t rl" style="left:26px;top:124px">диаграммы</div>
<div class="dd" style="left:92px;top:129px"></div>
<svg class="a" style="left:125px;top:68px" width="40" height="38" viewBox="0 0 40 38">
 <rect x="4.5" y="3.5" width="31" height="31" fill="#fff" stroke="#a8a8a8" stroke-width="1"/>
 <rect x="10" y="6.8" width="16" height="2" fill="#b4b4b4"/>
 <rect x="9.5" y="11.5" width="18" height="16" fill="#fff" stroke="#a8a8a8" stroke-width="0.9"/>
 <path d="M9.5 15.5h18M9.5 19.5h18M9.5 23.5h18" stroke="#b8b8b8" stroke-width="0.8"/>
 <rect x="11.5" y="18.5" width="2.8" height="9" fill="#fff" stroke="#7a7a7a" stroke-width="0.9"/>
 <rect x="14.8" y="14.5" width="3" height="13" fill="#d8d8d8" stroke="#7a7a7a" stroke-width="0.9"/>
 <rect x="19.5" y="17.5" width="3" height="10" fill="#fff" stroke="#7a7a7a" stroke-width="0.9"/>
 <rect x="23" y="21.5" width="2.8" height="6" fill="#d8d8d8" stroke="#7a7a7a" stroke-width="0.9"/>
 <path d="M9.5 27.6h18" stroke="#6a6a6a" stroke-width="1"/>
 <path d="M6 14.3h2M6 18.4h2M6 22.4h2M6 26.4h2M12 30.4h4M21 30.4h4" stroke="#a0a0a0" stroke-width="0.9"/>
 <rect x="29.5" y="13.5" width="4" height="8" fill="#fff" stroke="#7a7a7a" stroke-width="1"/>
 <circle cx="31.5" cy="15.5" r="0.6" fill="#666"/><circle cx="31.5" cy="17.5" r="0.6" fill="#666"/><circle cx="31.5" cy="19.5" r="0.6" fill="#666"/>
</svg>
<div class="t rl" style="left:117px;top:108px">Экспресс-</div>
<div class="t rl" style="left:126px;top:124px">макет</div>
<div class="dd" style="left:159px;top:129px"></div>
<div class="t gl" style="left:43px">Макеты диаграмм</div>
<div class="vsep" style="left:183px"></div>
<!-- group 2 -->
<svg class="a" style="left:200px;top:70px" width="40" height="34" viewBox="0 0 40 34">
 <circle cx="15" cy="8" r="4" fill="#e8b86b"/>
 <circle cx="27" cy="8" r="4" fill="#5f9e86"/>
 <circle cx="11" cy="19" r="4" fill="#d85a32"/>
 <circle cx="31" cy="19" r="4" fill="#4a7ebb"/>
 <circle cx="21" cy="26" r="4" fill="#e4711b"/>
</svg>
<div class="t rl" style="left:194px;top:108px">Изменить</div>
<div class="t rl" style="left:202px;top:124px">цвета</div>
<div class="dd" style="left:235px;top:129px"></div>
<div class="a" style="left:252px;top:71px;width:459px;height:60px;background:#fff;border:1px solid #cfcfcf"></div>
<div class="a" style="left:253px;top:73px;width:88px;height:56px;background:#c6c6c6"></div>
<!--THUMBS-->
<svg class="a" style="left:252px;top:71px" width="459" height="60" viewBox="252 71 459 60"><rect x="257" y="77" width="80" height="48" fill="#fff"/><rect x="283.0" y="80.4" width="28.0" height="1.6" fill="#b4b4b4"/><rect x="261.5" y="84.5" width="4" height="1" fill="#a0a0a0"/><rect x="261.5" y="87.1" width="4" height="1" fill="#a0a0a0"/><rect x="261.5" y="89.7" width="4" height="1" fill="#a0a0a0"/><rect x="261.5" y="92.3" width="4" height="1" fill="#a0a0a0"/><rect x="261.5" y="94.9" width="4" height="1" fill="#a0a0a0"/><rect x="261.5" y="97.5" width="4" height="1" fill="#a0a0a0"/><rect x="267.25" y="94.62" width="2.04" height="3.38" fill="#4472c4" opacity="1.00"/><rect x="267.25" y="90.20" width="2.04" height="4.42" fill="#ed7d31" opacity="1.00"/><rect x="267.25" y="88.25" width="2.04" height="1.95" fill="#a5a5a5" opacity="1.00"/><rect x="267.25" y="85.00" width="2.04" height="3.25" fill="#ffc000" opacity="1.00"/><rect x="271.78" y="94.62" width="2.04" height="3.38" fill="#4472c4" opacity="1.00"/><rect x="271.78" y="90.20" width="2.04" height="4.42" fill="#ed7d31" opacity="1.00"/><rect x="271.78" y="88.25" width="2.04" height="1.95" fill="#a5a5a5" opacity="1.00"/><rect x="271.78" y="85.00" width="2.04" height="3.25" fill="#ffc000" opacity="1.00"/><rect x="276.31" y="94.62" width="2.04" height="3.38" fill="#4472c4" opacity="1.00"/><rect x="276.31" y="90.20" width="2.04" height="4.42" fill="#ed7d31" opacity="1.00"/><rect x="276.31" y="88.25" width="2.04" height="1.95" fill="#a5a5a5" opacity="1.00"/><rect x="276.31" y="85.00" width="2.04" height="3.25" fill="#ffc000" opacity="1.00"/><rect x="280.85" y="94.62" width="2.04" height="3.38" fill="#4472c4" opacity="1.00"/><rect x="280.85" y="90.20" width="2.04" height="4.42" fill="#ed7d31" opacity="1.00"/><rect x="280.85" y="88.25" width="2.04" height="1.95" fill="#a5a5a5" opacity="1.00"/><rect x="280.85" y="85.00" width="2.04" height="3.25" fill="#ffc000" opacity="1.00"/><rect x="285.38" y="94.62" width="2.04" height="3.38" fill="#4472c4" opacity="1.00"/><rect x="285.38" y="90.20" width="2.04" height="4.42" fill="#ed7d31" opacity="1.00"/><rect x="285.38" y="88.25" width="2.04" height="1.95" fill="#a5a5a5" opacity="1.00"/><rect x="285.38" y="85.00" width="2.04" height="3.25" fill="#ffc000" opacity="1.00"/><rect x="289.91" y="94.62" width="2.04" height="3.38" fill="#4472c4" opacity="1.00"/><rect x="289.91" y="90.20" width="2.04" height="4.42" fill="#ed7d31" opacity="1.00"/><rect x="289.91" y="88.25" width="2.04" height="1.95" fill="#a5a5a5" opacity="1.00"/><rect x="289.91" y="85.00" width="2.04" height="3.25" fill="#ffc000" opacity="1.00"/><rect x="294.45" y="94.62" width="2.04" height="3.38" fill="#4472c4" opacity="1.00"/><rect x="294.45" y="90.20" width="2.04" height="4.42" fill="#ed7d31" opacity="1.00"/><rect x="294.45" y="88.25" width="2.04" height="1.95" fill="#a5a5a5" opacity="1.00"/><rect x="294.45" y="85.00" width="2.04" height="3.25" fill="#ffc000" opacity="1.00"/><rect x="298.98" y="94.62" width="2.04" height="3.38" fill="#4472c4" opacity="1.00"/><rect x="298.98" y="90.20" width="2.04" height="4.42" fill="#ed7d31" opacity="1.00"/><rect x="298.98" y="88.25" width="2.04" height="1.95" fill="#a5a5a5" opacity="1.00"/><rect x="298.98" y="85.00" width="2.04" height="3.25" fill="#ffc000" opacity="1.00"/><rect x="303.51" y="94.62" width="2.04" height="3.38" fill="#4472c4" opacity="1.00"/><rect x="303.51" y="90.20" width="2.04" height="4.42" fill="#ed7d31" opacity="1.00"/><rect x="303.51" y="88.25" width="2.04" height="1.95" fill="#a5a5a5" opacity="1.00"/><rect x="303.51" y="85.00" width="2.04" height="3.25" fill="#ffc000" opacity="1.00"/><rect x="308.05" y="94.62" width="2.04" height="3.38" fill="#4472c4" opacity="1.00"/><rect x="308.05" y="90.20" width="2.04" height="4.42" fill="#ed7d31" opacity="1.00"/><rect x="308.05" y="88.25" width="2.04" height="1.95" fill="#a5a5a5" opacity="1.00"/><rect x="308.05" y="85.00" width="2.04" height="3.25" fill="#ffc000" opacity="1.00"/><rect x="312.58" y="94.62" width="2.04" height="3.38" fill="#4472c4" opacity="1.00"/><rect x="312.58" y="90.20" width="2.04" height="4.42" fill="#ed7d31" opacity="1.00"/><rect x="312.58" y="88.25" width="2.04" height="1.95" fill="#a5a5a5" opacity="1.00"/><rect x="312.58" y="85.00" width="2.04" height="3.25" fill="#ffc000" opacity="1.00"/><rect x="317.11" y="94.62" width="2.04" height="3.38" fill="#4472c4" opacity="1.00"/><rect x="317.11" y="90.20" width="2.04" height="4.42" fill="#ed7d31" opacity="1.00"/><rect x="317.11" y="88.25" width="2.04" height="1.95" fill="#a5a5a5" opacity="1.00"/><rect x="317.11" y="85.00" width="2.04" height="3.25" fill="#ffc000" opacity="1.00"/><rect x="321.65" y="94.62" width="2.04" height="3.38" fill="#4472c4" opacity="1.00"/><rect x="321.65" y="90.20" width="2.04" height="4.42" fill="#ed7d31" opacity="1.00"/><rect x="321.65" y="88.25" width="2.04" height="1.95" fill="#a5a5a5" opacity="1.00"/><rect x="321.65" y="85.00" width="2.04" height="3.25" fill="#ffc000" opacity="1.00"/><rect x="326.18" y="94.62" width="2.04" height="3.38" fill="#4472c4" opacity="1.00"/><rect x="326.18" y="90.20" width="2.04" height="4.42" fill="#ed7d31" opacity="1.00"/><rect x="326.18" y="88.25" width="2.04" height="1.95" fill="#a5a5a5" opacity="1.00"/><rect x="326.18" y="85.00" width="2.04" height="3.25" fill="#ffc000" opacity="1.00"/><rect x="330.71" y="94.62" width="2.04" height="3.38" fill="#4472c4" opacity="1.00"/><rect x="330.71" y="90.20" width="2.04" height="4.42" fill="#ed7d31" opacity="1.00"/><rect x="330.71" y="88.25" width="2.04" height="1.95" fill="#a5a5a5" opacity="1.00"/><rect x="330.71" y="85.00" width="2.04" height="3.25" fill="#ffc000" opacity="1.00"/><path d="M269.27 99.00l-7.00 7.00" stroke="#c4c4c4" stroke-width="0.8"/><path d="M273.80 99.00l-7.00 7.00" stroke="#c4c4c4" stroke-width="0.8"/><path d="M278.33 99.00l-7.00 7.00" stroke="#c4c4c4" stroke-width="0.8"/><path d="M282.87 99.00l-7.00 7.00" stroke="#c4c4c4" stroke-width="0.8"/><path d="M287.40 99.00l-7.00 7.00" stroke="#c4c4c4" stroke-width="0.8"/><path d="M291.93 99.00l-7.00 7.00" stroke="#c4c4c4" stroke-width="0.8"/><path d="M296.47 99.00l-7.00 7.00" stroke="#c4c4c4" stroke-width="0.8"/><path d="M301.00 99.00l-7.00 7.00" stroke="#c4c4c4" stroke-width="0.8"/><path d="M305.53 99.00l-7.00 7.00" stroke="#c4c4c4" stroke-width="0.8"/><path d="M310.07 99.00l-7.00 7.00" stroke="#c4c4c4" stroke-width="0.8"/><path d="M314.60 99.00l-7.00 7.00" stroke="#c4c4c4" stroke-width="0.8"/><path d="M319.13 99.00l-7.00 7.00" stroke="#c4c4c4" stroke-width="0.8"/><path d="M323.67 99.00l-7.00 7.00" stroke="#c4c4c4" stroke-width="0.8"/><path d="M328.20 99.00l-7.00 7.00" stroke="#c4c4c4" stroke-width="0.8"/><path d="M332.73 99.00l-7.00 7.00" stroke="#c4c4c4" stroke-width="0.8"/><rect x="280.0" y="109.6" width="2" height="2" fill="#ffc000"/><rect x="283.0" y="110.0" width="35.0" height="1.2" fill="#c8c8c8"/><rect x="280.0" y="113.4" width="2" height="2" fill="#a5a5a5"/><rect x="283.0" y="113.8" width="35.0" height="1.2" fill="#c8c8c8"/><rect x="280.0" y="117.3" width="2" height="2" fill="#ed7d31"/><rect x="283.0" y="117.7" width="35.0" height="1.2" fill="#c8c8c8"/><rect x="280.0" y="121.2" width="2" height="2" fill="#4472c4"/><rect x="283.0" y="121.6" width="35.0" height="1.2" fill="#c8c8c8"/><rect x="345.5" y="77.5" width="79" height="47" fill="#fff" stroke="#f0f0f0"/><rect x="362.5" y="79.5" width="45.0" height="2.0" fill="#777"/><rect x="368.0" y="84.4" width="2" height="2" fill="#ffc000"/><rect x="371.0" y="84.8" width="35.0" height="1.2" fill="#c8c8c8"/><rect x="368.0" y="88.4" width="2" height="2" fill="#a5a5a5"/><rect x="371.0" y="88.8" width="35.0" height="1.2" fill="#c8c8c8"/><rect x="368.0" y="92.3" width="2" height="2" fill="#ed7d31"/><rect x="371.0" y="92.7" width="35.0" height="1.2" fill="#c8c8c8"/><rect x="368.0" y="95.6" width="2" height="2" fill="#4472c4"/><rect x="371.0" y="96.0" width="35.0" height="1.2" fill="#c8c8c8"/><rect x="354.26" y="110.27" width="2.07" height="2.73" fill="#4472c4" opacity="0.80"/><rect x="354.26" y="106.70" width="2.07" height="3.57" fill="#ed7d31" opacity="0.80"/><rect x="354.26" y="105.12" width="2.07" height="1.58" fill="#a5a5a5" opacity="0.80"/><rect x="354.26" y="102.50" width="2.07" height="2.62" fill="#ffc000" opacity="0.80"/><rect x="358.86" y="110.27" width="2.07" height="2.73" fill="#4472c4" opacity="0.80"/><rect x="358.86" y="106.70" width="2.07" height="3.57" fill="#ed7d31" opacity="0.80"/><rect x="358.86" y="105.12" width="2.07" height="1.58" fill="#a5a5a5" opacity="0.80"/><rect x="358.86" y="102.50" width="2.07" height="2.62" fill="#ffc000" opacity="0.80"/><rect x="363.46" y="110.27" width="2.07" height="2.73" fill="#4472c4" opacity="0.80"/><rect x="363.46" y="106.70" width="2.07" height="3.57" fill="#ed7d31" opacity="0.80"/><rect x="363.46" y="105.12" width="2.07" height="1.58" fill="#a5a5a5" opacity="0.80"/><rect x="363.46" y="102.50" width="2.07" height="2.62" fill="#ffc000" opacity="0.80"/><rect x="368.06" y="110.27" width="2.07" height="2.73" fill="#4472c4" opacity="0.80"/><rect x="368.06" y="106.70" width="2.07" height="3.57" fill="#ed7d31" opacity="0.80"/><rect x="368.06" y="105.12" width="2.07" height="1.58" fill="#a5a5a5" opacity="0.80"/><rect x="368.06" y="102.50" width="2.07" height="2.62" fill="#ffc000" opacity="0.80"/><rect x="372.66" y="110.27" width="2.07" height="2.73" fill="#4472c4" opacity="0.80"/><rect x="372.66" y="106.70" width="2.07" height="3.57" fill="#ed7d31" opacity="0.80"/><rect x="372.66" y="105.12" width="2.07" height="1.58" fill="#a5a5a5" opacity="0.80"/><rect x="372.66" y="102.50" width="2.07" height="2.62" fill="#ffc000" opacity="0.80"/><rect x="377.26" y="110.27" width="2.07" height="2.73" fill="#4472c4" opacity="0.80"/><rect x="377.26" y="106.70" width="2.07" height="3.57" fill="#ed7d31" opacity="0.80"/><rect x="377.26" y="105.12" width="2.07" height="1.58" fill="#a5a5a5" opacity="0.80"/><rect x="377.26" y="102.50" width="2.07" height="2.62" fill="#ffc000" opacity="0.80"/><rect x="381.86" y="110.27" width="2.07" height="2.73" fill="#4472c4" opacity="0.80"/><rect x="381.86" y="106.70" width="2.07" height="3.57" fill="#ed7d31" opacity="0.80"/><rect x="381.86" y="105.12" width="2.07" height="1.58" fill="#a5a5a5" opacity="0.80"/><rect x="381.86" y="102.50" width="2.07" height="2.62" fill="#ffc000" opacity="0.80"/><rect x="386.46" y="110.27" width="2.07" height="2.73" fill="#4472c4" opacity="0.80"/><rect x="386.46" y="106.70" width="2.07" height="3.57" fill="#ed7d31" opacity="0.80"/><rect x="386.46" y="105.12" width="2.07" height="1.58" fill="#a5a5a5" opacity="0.80"/><rect x="386.46" y="102.50" width="2.07" height="2.62" fill="#ffc000" opacity="0.80"/><rect x="391.06" y="110.27" width="2.07" height="2.73" fill="#4472c4" opacity="0.80"/><rect x="391.06" y="106.70" width="2.07" height="3.57" fill="#ed7d31" opacity="0.80"/><rect x="391.06" y="105.12" width="2.07" height="1.58" fill="#a5a5a5" opacity="0.80"/><rect x="391.06" y="102.50" width="2.07" height="2.62" fill="#ffc000" opacity="0.80"/><rect x="395.66" y="110.27" width="2.07" height="2.73" fill="#4472c4" opacity="0.80"/><rect x="395.66" y="106.70" width="2.07" height="3.57" fill="#ed7d31" opacity="0.80"/><rect x="395.66" y="105.12" width="2.07" height="1.58" fill="#a5a5a5" opacity="0.80"/><rect x="395.66" y="102.50" width="2.07" height="2.62" fill="#ffc000" opacity="0.80"/><rect x="400.26" y="110.27" width="2.07" height="2.73" fill="#4472c4" opacity="0.80"/><rect x="400.26" y="106.70" width="2.07" height="3.57" fill="#ed7d31" opacity="0.80"/><rect x="400.26" y="105.12" width="2.07" height="1.58" fill="#a5a5a5" opacity="0.80"/><rect x="400.26" y="102.50" width="2.07" height="2.62" fill="#ffc000" opacity="0.80"/><rect x="404.86" y="110.27" width="2.07" height="2.73" fill="#4472c4" opacity="0.80"/><rect x="404.86" y="106.70" width="2.07" height="3.57" fill="#ed7d31" opacity="0.80"/><rect x="404.86" y="105.12" width="2.07" height="1.58" fill="#a5a5a5" opacity="0.80"/><rect x="404.86" y="102.50" width="2.07" height="2.62" fill="#ffc000" opacity="0.80"/><rect x="409.46" y="110.27" width="2.07" height="2.73" fill="#4472c4" opacity="0.80"/><rect x="409.46" y="106.70" width="2.07" height="3.57" fill="#ed7d31" opacity="0.80"/><rect x="409.46" y="105.12" width="2.07" height="1.58" fill="#a5a5a5" opacity="0.80"/><rect x="409.46" y="102.50" width="2.07" height="2.62" fill="#ffc000" opacity="0.80"/><rect x="414.06" y="110.27" width="2.07" height="2.73" fill="#4472c4" opacity="0.80"/><rect x="414.06" y="106.70" width="2.07" height="3.57" fill="#ed7d31" opacity="0.80"/><rect x="414.06" y="105.12" width="2.07" height="1.58" fill="#a5a5a5" opacity="0.80"/><rect x="414.06" y="102.50" width="2.07" height="2.62" fill="#ffc000" opacity="0.80"/><rect x="418.66" y="110.27" width="2.07" height="2.73" fill="#4472c4" opacity="0.80"/><rect x="418.66" y="106.70" width="2.07" height="3.57" fill="#ed7d31" opacity="0.80"/><rect x="418.66" y="105.12" width="2.07" height="1.58" fill="#a5a5a5" opacity="0.80"/><rect x="418.66" y="102.50" width="2.07" height="2.62" fill="#ffc000" opacity="0.80"/><rect x="353.00" y="102.00" width="69.00" height="1" fill="#fff" opacity="0.7"/><rect x="353.00" y="104.10" width="69.00" height="1" fill="#fff" opacity="0.7"/><rect x="353.00" y="106.20" width="69.00" height="1" fill="#fff" opacity="0.7"/><rect x="353.00" y="108.30" width="69.00" height="1" fill="#fff" opacity="0.7"/><rect x="353.00" y="110.40" width="69.00" height="1" fill="#fff" opacity="0.7"/><rect x="353.00" y="112.50" width="69.00" height="1" fill="#fff" opacity="0.7"/><path d="M356.30 114.00l-8.00 8.00" stroke="#c4c4c4" stroke-width="0.8"/><path d="M360.90 114.00l-8.00 8.00" stroke="#c4c4c4" stroke-width="0.8"/><path d="M365.50 114.00l-8.00 8.00" stroke="#c4c4c4" stroke-width="0.8"/><path d="M370.10 114.00l-8.00 8.00" stroke="#c4c4c4" stroke-width="0.8"/><path d="M374.70 114.00l-8.00 8.00" stroke="#c4c4c4" stroke-width="0.8"/><path d="M379.30 114.00l-8.00 8.00" stroke="#c4c4c4" stroke-width="0.8"/><path d="M383.90 114.00l-8.00 8.00" stroke="#c4c4c4" stroke-width="0.8"/><path d="M388.50 114.00l-8.00 8.00" stroke="#c4c4c4" stroke-width="0.8"/><path d="M393.10 114.00l-8.00 8.00" stroke="#c4c4c4" stroke-width="0.8"/><path d="M397.70 114.00l-8.00 8.00" stroke="#c4c4c4" stroke-width="0.8"/><path d="M402.30 114.00l-8.00 8.00" stroke="#c4c4c4" stroke-width="0.8"/><path d="M406.90 114.00l-8.00 8.00" stroke="#c4c4c4" stroke-width="0.8"/><path d="M411.50 114.00l-8.00 8.00" stroke="#c4c4c4" stroke-width="0.8"/><path d="M416.10 114.00l-8.00 8.00" stroke="#c4c4c4" stroke-width="0.8"/><path d="M420.70 114.00l-8.00 8.00" stroke="#c4c4c4" stroke-width="0.8"/><rect x="433.5" y="77.5" width="79" height="47" fill="#fff" stroke="#f0f0f0"/><rect x="448.0" y="80.5" width="50.0" height="2.0" fill="#888"/><rect x="456.0" y="85.5" width="2" height="2" fill="#ffc000"/><rect x="459.0" y="85.9" width="35.0" height="1.2" fill="#c8c8c8"/><rect x="456.0" y="88.5" width="2" height="2" fill="#a5a5a5"/><rect x="459.0" y="88.9" width="35.0" height="1.2" fill="#c8c8c8"/><rect x="456.0" y="92.5" width="2" height="2" fill="#ed7d31"/><rect x="459.0" y="92.9" width="35.0" height="1.2" fill="#c8c8c8"/><rect x="456.0" y="96.0" width="2" height="2" fill="#4472c4"/><rect x="459.0" y="96.4" width="35.0" height="1.2" fill="#c8c8c8"/><rect x="435.5" y="102.0" width="4" height="1" fill="#a0a0a0"/><rect x="435.5" y="104.0" width="4" height="1" fill="#a0a0a0"/><rect x="435.5" y="106.0" width="4" height="1" fill="#a0a0a0"/><rect x="435.5" y="108.0" width="4" height="1" fill="#a0a0a0"/><rect x="435.5" y="110.0" width="4" height="1" fill="#a0a0a0"/><rect x="435.5" y="112.0" width="4" height="1" fill="#a0a0a0"/><rect x="442.25" y="110.14" width="2.04" height="2.86" fill="#4472c4" opacity="0.90"/><rect x="442.25" y="106.40" width="2.04" height="3.74" fill="#ed7d31" opacity="0.90"/><rect x="442.25" y="104.75" width="2.04" height="1.65" fill="#a5a5a5" opacity="0.90"/><rect x="442.25" y="102.00" width="2.04" height="2.75" fill="#ffc000" opacity="0.90"/><rect x="446.78" y="110.14" width="2.04" height="2.86" fill="#4472c4" opacity="0.90"/><rect x="446.78" y="106.40" width="2.04" height="3.74" fill="#ed7d31" opacity="0.90"/><rect x="446.78" y="104.75" width="2.04" height="1.65" fill="#a5a5a5" opacity="0.90"/><rect x="446.78" y="102.00" width="2.04" height="2.75" fill="#ffc000" opacity="0.90"/><rect x="451.31" y="110.14" width="2.04" height="2.86" fill="#4472c4" opacity="0.90"/><rect x="451.31" y="106.40" width="2.04" height="3.74" fill="#ed7d31" opacity="0.90"/><rect x="451.31" y="104.75" width="2.04" height="1.65" fill="#a5a5a5" opacity="0.90"/><rect x="451.31" y="102.00" width="2.04" height="2.75" fill="#ffc000" opacity="0.90"/><rect x="455.85" y="110.14" width="2.04" height="2.86" fill="#4472c4" opacity="0.90"/><rect x="455.85" y="106.40" width="2.04" height="3.74" fill="#ed7d31" opacity="0.90"/><rect x="455.85" y="104.75" width="2.04" height="1.65" fill="#a5a5a5" opacity="0.90"/><rect x="455.85" y="102.00" width="2.04" height="2.75" fill="#ffc000" opacity="0.90"/><rect x="460.38" y="110.14" width="2.04" height="2.86" fill="#4472c4" opacity="0.90"/><rect x="460.38" y="106.40" width="2.04" height="3.74" fill="#ed7d31" opacity="0.90"/><rect x="460.38" y="104.75" width="2.04" height="1.65" fill="#a5a5a5" opacity="0.90"/><rect x="460.38" y="102.00" width="2.04" height="2.75" fill="#ffc000" opacity="0.90"/><rect x="464.91" y="110.14" width="2.04" height="2.86" fill="#4472c4" opacity="0.90"/><rect x="464.91" y="106.40" width="2.04" height="3.74" fill="#ed7d31" opacity="0.90"/><rect x="464.91" y="104.75" width="2.04" height="1.65" fill="#a5a5a5" opacity="0.90"/><rect x="464.91" y="102.00" width="2.04" height="2.75" fill="#ffc000" opacity="0.90"/><rect x="469.45" y="110.14" width="2.04" height="2.86" fill="#4472c4" opacity="0.90"/><rect x="469.45" y="106.40" width="2.04" height="3.74" fill="#ed7d31" opacity="0.90"/><rect x="469.45" y="104.75" width="2.04" height="1.65" fill="#a5a5a5" opacity="0.90"/><rect x="469.45" y="102.00" width="2.04" height="2.75" fill="#ffc000" opacity="0.90"/><rect x="473.98" y="110.14" width="2.04" height="2.86" fill="#4472c4" opacity="0.90"/><rect x="473.98" y="106.40" width="2.04" height="3.74" fill="#ed7d31" opacity="0.90"/><rect x="473.98" y="104.75" width="2.04" height="1.65" fill="#a5a5a5" opacity="0.90"/><rect x="473.98" y="102.00" width="2.04" height="2.75" fill="#ffc000" opacity="0.90"/><rect x="478.51" y="110.14" width="2.04" height="2.86" fill="#4472c4" opacity="0.90"/><rect x="478.51" y="106.40" width="2.04" height="3.74" fill="#ed7d31" opacity="0.90"/><rect x="478.51" y="104.75" width="2.04" height="1.65" fill="#a5a5a5" opacity="0.90"/><rect x="478.51" y="102.00" width="2.04" height="2.75" fill="#ffc000" opacity="0.90"/><rect x="483.05" y="110.14" width="2.04" height="2.86" fill="#4472c4" opacity="0.90"/><rect x="483.05" y="106.40" width="2.04" height="3.74" fill="#ed7d31" opacity="0.90"/><rect x="483.05" y="104.75" width="2.04" height="1.65" fill="#a5a5a5" opacity="0.90"/><rect x="483.05" y="102.00" width="2.04" height="2.75" fill="#ffc000" opacity="0.90"/><rect x="487.58" y="110.14" width="2.04" height="2.86" fill="#4472c4" opacity="0.90"/><rect x="487.58" y="106.40" width="2.04" height="3.74" fill="#ed7d31" opacity="0.90"/><rect x="487.58" y="104.75" width="2.04" height="1.65" fill="#a5a5a5" opacity="0.90"/><rect x="487.58" y="102.00" width="2.04" height="2.75" fill="#ffc000" opacity="0.90"/><rect x="492.11" y="110.14" width="2.04" height="2.86" fill="#4472c4" opacity="0.90"/><rect x="492.11" y="106.40" width="2.04" height="3.74" fill="#ed7d31" opacity="0.90"/><rect x="492.11" y="104.75" width="2.04" height="1.65" fill="#a5a5a5" opacity="0.90"/><rect x="492.11" y="102.00" width="2.04" height="2.75" fill="#ffc000" opacity="0.90"/><rect x="496.65" y="110.14" width="2.04" height="2.86" fill="#4472c4" opacity="0.90"/><rect x="496.65" y="106.40" width="2.04" height="3.74" fill="#ed7d31" opacity="0.90"/><rect x="496.65" y="104.75" width="2.04" height="1.65" fill="#a5a5a5" opacity="0.90"/><rect x="496.65" y="102.00" width="2.04" height="2.75" fill="#ffc000" opacity="0.90"/><rect x="501.18" y="110.14" width="2.04" height="2.86" fill="#4472c4" opacity="0.90"/><rect x="501.18" y="106.40" width="2.04" height="3.74" fill="#ed7d31" opacity="0.90"/><rect x="501.18" y="104.75" width="2.04" height="1.65" fill="#a5a5a5" opacity="0.90"/><rect x="501.18" y="102.00" width="2.04" height="2.75" fill="#ffc000" opacity="0.90"/><rect x="505.71" y="110.14" width="2.04" height="2.86" fill="#4472c4" opacity="0.90"/><rect x="505.71" y="106.40" width="2.04" height="3.74" fill="#ed7d31" opacity="0.90"/><rect x="505.71" y="104.75" width="2.04" height="1.65" fill="#a5a5a5" opacity="0.90"/><rect x="505.71" y="102.00" width="2.04" height="2.75" fill="#ffc000" opacity="0.90"/><rect x="441.00" y="101.50" width="68.00" height="1" fill="#fff" opacity="0.7"/><rect x="441.00" y="103.70" width="68.00" height="1" fill="#fff" opacity="0.7"/><rect x="441.00" y="105.90" width="68.00" height="1" fill="#fff" opacity="0.7"/><rect x="441.00" y="108.10" width="68.00" height="1" fill="#fff" opacity="0.7"/><rect x="441.00" y="110.30" width="68.00" height="1" fill="#fff" opacity="0.7"/><rect x="441.00" y="112.50" width="68.00" height="1" fill="#fff" opacity="0.7"/><path d="M444.27 114.00l-8.00 8.00" stroke="#c4c4c4" stroke-width="0.8"/><path d="M448.80 114.00l-8.00 8.00" stroke="#c4c4c4" stroke-width="0.8"/><path d="M453.33 114.00l-8.00 8.00" stroke="#c4c4c4" stroke-width="0.8"/><path d="M457.87 114.00l-8.00 8.00" stroke="#c4c4c4" stroke-width="0.8"/><path d="M462.40 114.00l-8.00 8.00" stroke="#c4c4c4" stroke-width="0.8"/><path d="M466.93 114.00l-8.00 8.00" stroke="#c4c4c4" stroke-width="0.8"/><path d="M471.47 114.00l-8.00 8.00" stroke="#c4c4c4" stroke-width="0.8"/><path d="M476.00 114.00l-8.00 8.00" stroke="#c4c4c4" stroke-width="0.8"/><path d="M480.53 114.00l-8.00 8.00" stroke="#c4c4c4" stroke-width="0.8"/><path d="M485.07 114.00l-8.00 8.00" stroke="#c4c4c4" stroke-width="0.8"/><path d="M489.60 114.00l-8.00 8.00" stroke="#c4c4c4" stroke-width="0.8"/><path d="M494.13 114.00l-8.00 8.00" stroke="#c4c4c4" stroke-width="0.8"/><path d="M498.67 114.00l-8.00 8.00" stroke="#c4c4c4" stroke-width="0.8"/><path d="M503.20 114.00l-8.00 8.00" stroke="#c4c4c4" stroke-width="0.8"/><path d="M507.73 114.00l-8.00 8.00" stroke="#c4c4c4" stroke-width="0.8"/><defs><linearGradient id="g4" x1="0" y1="1" x2="1" y2="0"><stop offset="0" stop-color="#c4c4c4"/><stop offset="0.55" stop-color="#ececec"/><stop offset="1" stop-color="#d6d6d6"/></linearGradient></defs><rect x="521" y="77" width="80" height="48" fill="url(#g4)"/><rect x="542.0" y="80.4" width="38.0" height="2.2" fill="#333"/><rect x="529.30" y="94.88" width="2.13" height="3.12" fill="#4472c4" opacity="1.00"/><rect x="529.30" y="90.80" width="2.13" height="4.08" fill="#ed7d31" opacity="1.00"/><rect x="529.30" y="89.00" width="2.13" height="1.80" fill="#a5a5a5" opacity="1.00"/><rect x="529.30" y="86.00" width="2.13" height="3.00" fill="#ffc000" opacity="1.00"/><rect x="534.03" y="94.88" width="2.13" height="3.12" fill="#4472c4" opacity="1.00"/><rect x="534.03" y="90.80" width="2.13" height="4.08" fill="#ed7d31" opacity="1.00"/><rect x="534.03" y="89.00" width="2.13" height="1.80" fill="#a5a5a5" opacity="1.00"/><rect x="534.03" y="86.00" width="2.13" height="3.00" fill="#ffc000" opacity="1.00"/><rect x="538.77" y="94.88" width="2.13" height="3.12" fill="#4472c4" opacity="1.00"/><rect x="538.77" y="90.80" width="2.13" height="4.08" fill="#ed7d31" opacity="1.00"/><rect x="538.77" y="89.00" width="2.13" height="1.80" fill="#a5a5a5" opacity="1.00"/><rect x="538.77" y="86.00" width="2.13" height="3.00" fill="#ffc000" opacity="1.00"/><rect x="543.50" y="94.88" width="2.13" height="3.12" fill="#4472c4" opacity="1.00"/><rect x="543.50" y="90.80" width="2.13" height="4.08" fill="#ed7d31" opacity="1.00"/><rect x="543.50" y="89.00" width="2.13" height="1.80" fill="#a5a5a5" opacity="1.00"/><rect x="543.50" y="86.00" width="2.13" height="3.00" fill="#ffc000" opacity="1.00"/><rect x="548.23" y="94.88" width="2.13" height="3.12" fill="#4472c4" opacity="1.00"/><rect x="548.23" y="90.80" width="2.13" height="4.08" fill="#ed7d31" opacity="1.00"/><rect x="548.23" y="89.00" width="2.13" height="1.80" fill="#a5a5a5" opacity="1.00"/><rect x="548.23" y="86.00" width="2.13" height="3.00" fill="#ffc000" opacity="1.00"/><rect x="552.97" y="94.88" width="2.13" height="3.12" fill="#4472c4" opacity="1.00"/><rect x="552.97" y="90.80" width="2.13" height="4.08" fill="#ed7d31" opacity="1.00"/><rect x="552.97" y="89.00" width="2.13" height="1.80" fill="#a5a5a5" opacity="1.00"/><rect x="552.97" y="86.00" width="2.13" height="3.00" fill="#ffc000" opacity="1.00"/><rect x="557.70" y="94.88" width="2.13" height="3.12" fill="#4472c4" opacity="1.00"/><rect x="557.70" y="90.80" width="2.13" height="4.08" fill="#ed7d31" opacity="1.00"/><rect x="557.70" y="89.00" width="2.13" height="1.80" fill="#a5a5a5" opacity="1.00"/><rect x="557.70" y="86.00" width="2.13" height="3.00" fill="#ffc000" opacity="1.00"/><rect x="562.43" y="94.88" width="2.13" height="3.12" fill="#4472c4" opacity="1.00"/><rect x="562.43" y="90.80" width="2.13" height="4.08" fill="#ed7d31" opacity="1.00"/><rect x="562.43" y="89.00" width="2.13" height="1.80" fill="#a5a5a5" opacity="1.00"/><rect x="562.43" y="86.00" width="2.13" height="3.00" fill="#ffc000" opacity="1.00"/><rect x="567.17" y="94.88" width="2.13" height="3.12" fill="#4472c4" opacity="1.00"/><rect x="567.17" y="90.80" width="2.13" height="4.08" fill="#ed7d31" opacity="1.00"/><rect x="567.17" y="89.00" width="2.13" height="1.80" fill="#a5a5a5" opacity="1.00"/><rect x="567.17" y="86.00" width="2.13" height="3.00" fill="#ffc000" opacity="1.00"/><rect x="571.90" y="94.88" width="2.13" height="3.12" fill="#4472c4" opacity="1.00"/><rect x="571.90" y="90.80" width="2.13" height="4.08" fill="#ed7d31" opacity="1.00"/><rect x="571.90" y="89.00" width="2.13" height="1.80" fill="#a5a5a5" opacity="1.00"/><rect x="571.90" y="86.00" width="2.13" height="3.00" fill="#ffc000" opacity="1.00"/><rect x="576.63" y="94.88" width="2.13" height="3.12" fill="#4472c4" opacity="1.00"/><rect x="576.63" y="90.80" width="2.13" height="4.08" fill="#ed7d31" opacity="1.00"/><rect x="576.63" y="89.00" width="2.13" height="1.80" fill="#a5a5a5" opacity="1.00"/><rect x="576.63" y="86.00" width="2.13" height="3.00" fill="#ffc000" opacity="1.00"/><rect x="581.37" y="94.88" width="2.13" height="3.12" fill="#4472c4" opacity="1.00"/><rect x="581.37" y="90.80" width="2.13" height="4.08" fill="#ed7d31" opacity="1.00"/><rect x="581.37" y="89.00" width="2.13" height="1.80" fill="#a5a5a5" opacity="1.00"/><rect x="581.37" y="86.00" width="2.13" height="3.00" fill="#ffc000" opacity="1.00"/><rect x="586.10" y="94.88" width="2.13" height="3.12" fill="#4472c4" opacity="1.00"/><rect x="586.10" y="90.80" width="2.13" height="4.08" fill="#ed7d31" opacity="1.00"/><rect x="586.10" y="89.00" width="2.13" height="1.80" fill="#a5a5a5" opacity="1.00"/><rect x="586.10" y="86.00" width="2.13" height="3.00" fill="#ffc000" opacity="1.00"/><rect x="590.83" y="94.88" width="2.13" height="3.12" fill="#4472c4" opacity="1.00"/><rect x="590.83" y="90.80" width="2.13" height="4.08" fill="#ed7d31" opacity="1.00"/><rect x="590.83" y="89.00" width="2.13" height="1.80" fill="#a5a5a5" opacity="1.00"/><rect x="590.83" y="86.00" width="2.13" height="3.00" fill="#ffc000" opacity="1.00"/><rect x="595.57" y="94.88" width="2.13" height="3.12" fill="#4472c4" opacity="1.00"/><rect x="595.57" y="90.80" width="2.13" height="4.08" fill="#ed7d31" opacity="1.00"/><rect x="595.57" y="89.00" width="2.13" height="1.80" fill="#a5a5a5" opacity="1.00"/><rect x="595.57" y="86.00" width="2.13" height="3.00" fill="#ffc000" opacity="1.00"/><rect x="528.00" y="85.50" width="71.00" height="1" fill="#fff" opacity="0.7"/><rect x="528.00" y="87.90" width="71.00" height="1" fill="#fff" opacity="0.7"/><rect x="528.00" y="90.30" width="71.00" height="1" fill="#fff" opacity="0.7"/><rect x="528.00" y="92.70" width="71.00" height="1" fill="#fff" opacity="0.7"/><rect x="528.00" y="95.10" width="71.00" height="1" fill="#fff" opacity="0.7"/><rect x="528.00" y="97.50" width="71.00" height="1" fill="#fff" opacity="0.7"/><path d="M531.37 99.50l-8.00 8.00" stroke="#a0a0a0" stroke-width="0.8"/><path d="M536.10 99.50l-8.00 8.00" stroke="#a0a0a0" stroke-width="0.8"/><path d="M540.83 99.50l-8.00 8.00" stroke="#a0a0a0" stroke-width="0.8"/><path d="M545.57 99.50l-8.00 8.00" stroke="#a0a0a0" stroke-width="0.8"/><path d="M550.30 99.50l-8.00 8.00" stroke="#a0a0a0" stroke-width="0.8"/><path d="M555.03 99.50l-8.00 8.00" stroke="#a0a0a0" stroke-width="0.8"/><path d="M559.77 99.50l-8.00 8.00" stroke="#a0a0a0" stroke-width="0.8"/><path d="M564.50 99.50l-8.00 8.00" stroke="#a0a0a0" stroke-width="0.8"/><path d="M569.23 99.50l-8.00 8.00" stroke="#a0a0a0" stroke-width="0.8"/><path d="M573.97 99.50l-8.00 8.00" stroke="#a0a0a0" stroke-width="0.8"/><path d="M578.70 99.50l-8.00 8.00" stroke="#a0a0a0" stroke-width="0.8"/><path d="M583.43 99.50l-8.00 8.00" stroke="#a0a0a0" stroke-width="0.8"/><path d="M588.17 99.50l-8.00 8.00" stroke="#a0a0a0" stroke-width="0.8"/><path d="M592.90 99.50l-8.00 8.00" stroke="#a0a0a0" stroke-width="0.8"/><path d="M597.63 99.50l-8.00 8.00" stroke="#a0a0a0" stroke-width="0.8"/><rect x="544" y="107" width="35" height="17" fill="#f4f4f4" opacity="0.6"/><rect x="545.0" y="109.8" width="2" height="2" fill="#ffc000"/><rect x="548.0" y="110.2" width="34.0" height="1.2" fill="#b0b0b0"/><rect x="545.0" y="113.6" width="2" height="2" fill="#a5a5a5"/><rect x="548.0" y="114.0" width="34.0" height="1.2" fill="#b0b0b0"/><rect x="545.0" y="117.5" width="2" height="2" fill="#ed7d31"/><rect x="548.0" y="117.9" width="34.0" height="1.2" fill="#b0b0b0"/><rect x="545.0" y="121.3" width="2" height="2" fill="#4472c4"/><rect x="548.0" y="121.7" width="34.0" height="1.2" fill="#b0b0b0"/><rect x="609.5" y="77.5" width="79" height="47" fill="#fff" stroke="#f0f0f0"/><rect x="634.0" y="80.2" width="30.0" height="1.6" fill="#aaa"/><rect x="612.0" y="84.5" width="4" height="1" fill="#a0a0a0"/><rect x="612.0" y="87.1" width="4" height="1" fill="#a0a0a0"/><rect x="612.0" y="89.7" width="4" height="1" fill="#a0a0a0"/><rect x="612.0" y="92.3" width="4" height="1" fill="#a0a0a0"/><rect x="612.0" y="94.9" width="4" height="1" fill="#a0a0a0"/><rect x="612.0" y="97.5" width="4" height="1" fill="#a0a0a0"/><rect x="618.28" y="94.62" width="2.10" height="3.38" fill="#4472c4" opacity="0.75"/><rect x="618.28" y="90.20" width="2.10" height="4.42" fill="#ed7d31" opacity="0.75"/><rect x="618.28" y="88.25" width="2.10" height="1.95" fill="#a5a5a5" opacity="0.75"/><rect x="618.28" y="85.00" width="2.10" height="3.25" fill="#ffc000" opacity="0.75"/><rect x="622.95" y="94.62" width="2.10" height="3.38" fill="#4472c4" opacity="0.75"/><rect x="622.95" y="90.20" width="2.10" height="4.42" fill="#ed7d31" opacity="0.75"/><rect x="622.95" y="88.25" width="2.10" height="1.95" fill="#a5a5a5" opacity="0.75"/><rect x="622.95" y="85.00" width="2.10" height="3.25" fill="#ffc000" opacity="0.75"/><rect x="627.62" y="94.62" width="2.10" height="3.38" fill="#4472c4" opacity="0.75"/><rect x="627.62" y="90.20" width="2.10" height="4.42" fill="#ed7d31" opacity="0.75"/><rect x="627.62" y="88.25" width="2.10" height="1.95" fill="#a5a5a5" opacity="0.75"/><rect x="627.62" y="85.00" width="2.10" height="3.25" fill="#ffc000" opacity="0.75"/><rect x="632.28" y="94.62" width="2.10" height="3.38" fill="#4472c4" opacity="0.75"/><rect x="632.28" y="90.20" width="2.10" height="4.42" fill="#ed7d31" opacity="0.75"/><rect x="632.28" y="88.25" width="2.10" height="1.95" fill="#a5a5a5" opacity="0.75"/><rect x="632.28" y="85.00" width="2.10" height="3.25" fill="#ffc000" opacity="0.75"/><rect x="636.95" y="94.62" width="2.10" height="3.38" fill="#4472c4" opacity="0.75"/><rect x="636.95" y="90.20" width="2.10" height="4.42" fill="#ed7d31" opacity="0.75"/><rect x="636.95" y="88.25" width="2.10" height="1.95" fill="#a5a5a5" opacity="0.75"/><rect x="636.95" y="85.00" width="2.10" height="3.25" fill="#ffc000" opacity="0.75"/><rect x="641.62" y="94.62" width="2.10" height="3.38" fill="#4472c4" opacity="0.75"/><rect x="641.62" y="90.20" width="2.10" height="4.42" fill="#ed7d31" opacity="0.75"/><rect x="641.62" y="88.25" width="2.10" height="1.95" fill="#a5a5a5" opacity="0.75"/><rect x="641.62" y="85.00" width="2.10" height="3.25" fill="#ffc000" opacity="0.75"/><rect x="646.28" y="94.62" width="2.10" height="3.38" fill="#4472c4" opacity="0.75"/><rect x="646.28" y="90.20" width="2.10" height="4.42" fill="#ed7d31" opacity="0.75"/><rect x="646.28" y="88.25" width="2.10" height="1.95" fill="#a5a5a5" opacity="0.75"/><rect x="646.28" y="85.00" width="2.10" height="3.25" fill="#ffc000" opacity="0.75"/><rect x="650.95" y="94.62" width="2.10" height="3.38" fill="#4472c4" opacity="0.75"/><rect x="650.95" y="90.20" width="2.10" height="4.42" fill="#ed7d31" opacity="0.75"/><rect x="650.95" y="88.25" width="2.10" height="1.95" fill="#a5a5a5" opacity="0.75"/><rect x="650.95" y="85.00" width="2.10" height="3.25" fill="#ffc000" opacity="0.75"/><rect x="655.62" y="94.62" width="2.10" height="3.38" fill="#4472c4" opacity="0.75"/><rect x="655.62" y="90.20" width="2.10" height="4.42" fill="#ed7d31" opacity="0.75"/><rect x="655.62" y="88.25" width="2.10" height="1.95" fill="#a5a5a5" opacity="0.75"/><rect x="655.62" y="85.00" width="2.10" height="3.25" fill="#ffc000" opacity="0.75"/><rect x="660.28" y="94.62" width="2.10" height="3.38" fill="#4472c4" opacity="0.75"/><rect x="660.28" y="90.20" width="2.10" height="4.42" fill="#ed7d31" opacity="0.75"/><rect x="660.28" y="88.25" width="2.10" height="1.95" fill="#a5a5a5" opacity="0.75"/><rect x="660.28" y="85.00" width="2.10" height="3.25" fill="#ffc000" opacity="0.75"/><rect x="664.95" y="94.62" width="2.10" height="3.38" fill="#4472c4" opacity="0.75"/><rect x="664.95" y="90.20" width="2.10" height="4.42" fill="#ed7d31" opacity="0.75"/><rect x="664.95" y="88.25" width="2.10" height="1.95" fill="#a5a5a5" opacity="0.75"/><rect x="664.95" y="85.00" width="2.10" height="3.25" fill="#ffc000" opacity="0.75"/><rect x="669.62" y="94.62" width="2.10" height="3.38" fill="#4472c4" opacity="0.75"/><rect x="669.62" y="90.20" width="2.10" height="4.42" fill="#ed7d31" opacity="0.75"/><rect x="669.62" y="88.25" width="2.10" height="1.95" fill="#a5a5a5" opacity="0.75"/><rect x="669.62" y="85.00" width="2.10" height="3.25" fill="#ffc000" opacity="0.75"/><rect x="674.28" y="94.62" width="2.10" height="3.38" fill="#4472c4" opacity="0.75"/><rect x="674.28" y="90.20" width="2.10" height="4.42" fill="#ed7d31" opacity="0.75"/><rect x="674.28" y="88.25" width="2.10" height="1.95" fill="#a5a5a5" opacity="0.75"/><rect x="674.28" y="85.00" width="2.10" height="3.25" fill="#ffc000" opacity="0.75"/><rect x="678.95" y="94.62" width="2.10" height="3.38" fill="#4472c4" opacity="0.75"/><rect x="678.95" y="90.20" width="2.10" height="4.42" fill="#ed7d31" opacity="0.75"/><rect x="678.95" y="88.25" width="2.10" height="1.95" fill="#a5a5a5" opacity="0.75"/><rect x="678.95" y="85.00" width="2.10" height="3.25" fill="#ffc000" opacity="0.75"/><rect x="683.62" y="94.62" width="2.10" height="3.38" fill="#4472c4" opacity="0.75"/><rect x="683.62" y="90.20" width="2.10" height="4.42" fill="#ed7d31" opacity="0.75"/><rect x="683.62" y="88.25" width="2.10" height="1.95" fill="#a5a5a5" opacity="0.75"/><rect x="683.62" y="85.00" width="2.10" height="3.25" fill="#ffc000" opacity="0.75"/><path d="M620.33 99.00l-7.00 7.00" stroke="#c4c4c4" stroke-width="0.8"/><path d="M625.00 99.00l-7.00 7.00" stroke="#c4c4c4" stroke-width="0.8"/><path d="M629.67 99.00l-7.00 7.00" stroke="#c4c4c4" stroke-width="0.8"/><path d="M634.33 99.00l-7.00 7.00" stroke="#c4c4c4" stroke-width="0.8"/><path d="M639.00 99.00l-7.00 7.00" stroke="#c4c4c4" stroke-width="0.8"/><path d="M643.67 99.00l-7.00 7.00" stroke="#c4c4c4" stroke-width="0.8"/><path d="M648.33 99.00l-7.00 7.00" stroke="#c4c4c4" stroke-width="0.8"/><path d="M653.00 99.00l-7.00 7.00" stroke="#c4c4c4" stroke-width="0.8"/><path d="M657.67 99.00l-7.00 7.00" stroke="#c4c4c4" stroke-width="0.8"/><path d="M662.33 99.00l-7.00 7.00" stroke="#c4c4c4" stroke-width="0.8"/><path d="M667.00 99.00l-7.00 7.00" stroke="#c4c4c4" stroke-width="0.8"/><path d="M671.67 99.00l-7.00 7.00" stroke="#c4c4c4" stroke-width="0.8"/><path d="M676.33 99.00l-7.00 7.00" stroke="#c4c4c4" stroke-width="0.8"/><path d="M681.00 99.00l-7.00 7.00" stroke="#c4c4c4" stroke-width="0.8"/><path d="M685.67 99.00l-7.00 7.00" stroke="#c4c4c4" stroke-width="0.8"/><rect x="632.0" y="109.5" width="2" height="2" fill="#ffc000"/><rect x="635.0" y="109.9" width="35.0" height="1.2" fill="#c8c8c8"/><rect x="632.0" y="113.3" width="2" height="2" fill="#a5a5a5"/><rect x="635.0" y="113.7" width="35.0" height="1.2" fill="#c8c8c8"/><rect x="632.0" y="117.1" width="2" height="2" fill="#ed7d31"/><rect x="635.0" y="117.5" width="35.0" height="1.2" fill="#c8c8c8"/><rect x="632.0" y="121.0" width="2" height="2" fill="#4472c4"/><rect x="635.0" y="121.4" width="35.0" height="1.2" fill="#c8c8c8"/></svg>
<!--/THUMBS-->
<div class="a" style="left:694px;top:71px;width:17px;height:60px;border:1px solid #c6c6c6;background:#f7f7f7"></div>
<div class="a" style="left:694px;top:92px;width:17px;height:19px;border:1px solid #a6a6a6;background:#fff"></div>
<svg class="a" style="left:694px;top:71px" width="17" height="60" viewBox="0 0 17 60">
 <path d="M3 14l5.5-5.5 5.5 5.5" fill="none" stroke="#c6c6c6" stroke-width="1.1"/>
 <path d="M3 29l5.5 5.5 5.5-5.5" fill="none" stroke="#444" stroke-width="1.1"/>
 <path d="M3 43.5h11" stroke="#444" stroke-width="1.1"/>
 <path d="M3 48l5.5 5.5 5.5-5.5" fill="none" stroke="#444" stroke-width="1.1"/>
</svg>
<div class="t gl" style="left:408px">Стили диаграмм</div>
<div class="vsep" style="left:721px"></div>
<!-- group 3 -->
<svg class="a" style="left:735px;top:70px" width="90" height="36" viewBox="0 0 90 36">
 <rect x="5.5" y="3.5" width="28" height="25" fill="#fff" stroke="#7a7a7a"/>
 <rect x="5" y="3" width="29" height="4.8" fill="#7a7a7a"/>
 <path d="M6 12.6h27M6 17.5h27M6 22.6h27M12.6 8v20M19.6 8v20M26.8 8v20" stroke="#a8a8a8" stroke-width="0.9"/>
 <path d="M22.8 12.5h4v10.1h-11.6M19.6 22.6v-5.1h7.2" fill="none" stroke="#e4711b" stroke-width="1.2"/>
 <path d="M12 22.5C10.5 16 15 12.3 21.5 12.5" fill="none" stroke="#3b78c4" stroke-width="2.4"/>
 <path d="M19 9l3.6 3.5-3.2 3.7" fill="none" stroke="#3b78c4" stroke-width="2.2"/>
 <path d="M8.5 19.5l3.3 3.8 3.4-3.2" fill="none" stroke="#3b78c4" stroke-width="2.2"/>
 <rect x="56.5" y="4.5" width="28" height="24" fill="#fff" stroke="#7a7a7a"/>
 <rect x="56" y="4" width="29" height="4.6" fill="#7a7a7a"/>
 <path d="M57 13.3h27M57 18.4h27M57 23.4h27M63.2 8.6v20M70.2 8.6v20M77.4 8.6v20" stroke="#a8a8a8" stroke-width="0.9"/>
 <path d="M77.4 15.6v-2.3h-14.2v10.1h5.5" fill="none" stroke="#e4711b" stroke-width="1.2"/>
 <rect x="70.5" y="17.3" width="16" height="15" fill="#fff" stroke="#7a7a7a"/>
 <rect x="72.8" y="23.8" width="2.5" height="8.5" fill="#fff" stroke="#7a7a7a" stroke-width="0.9"/>
 <rect x="75.8" y="20.4" width="2.8" height="11.9" fill="#d4d4d4" stroke="#7a7a7a" stroke-width="0.9"/>
 <rect x="79" y="23.8" width="2.5" height="8.5" fill="#fff" stroke="#7a7a7a" stroke-width="0.9"/>
 <rect x="82" y="25.5" width="2.5" height="6.8" fill="#d4d4d4" stroke="#7a7a7a" stroke-width="0.9"/>
</svg>
<div class="t rl" style="left:733px;top:108px">Строка/</div>
<div class="t rl" style="left:733px;top:124px">столбец</div>

<div class="t rl" style="left:783px;top:108px">Выбрать</div>
<div class="t rl" style="left:785px;top:124px">данные</div>
<div class="t gl" style="left:759px">Данные</div>
<div class="vsep" style="left:839px"></div>
<!-- group 4 -->
<svg class="a" style="left:874px;top:72px" width="34" height="34" viewBox="0 0 34 34">
 <rect x="2" y="10" width="7" height="18" fill="#4a7ebb"/>
 <rect x="10" y="2" width="7" height="26" fill="#ecc674"/>
 <rect x="18" y="7" width="7" height="21" fill="#7f7f7f"/>
</svg>
<div class="t rl" style="left:851px;top:108px">Изменить тип</div>
<div class="t rl" style="left:856px;top:124px">диаграммы</div>
<div class="t gl" style="left:878px">Тип</div>
<div class="vsep" style="left:936px"></div>
<!-- group 5 -->
<svg class="a" style="left:965px;top:70px" width="36" height="32" viewBox="0 0 36 32">
 <path d="M4.5 4.5h27v19.8h-16.8l-3.1 3.8h-7.1z" fill="#fff" stroke="#777" stroke-width="1.2" stroke-linejoin="round"/>
 <path d="M14.7 24.3h8.8l-3 3.8h-5.5z" fill="#fff" stroke="#777" stroke-width="1.2" stroke-linejoin="round"/>
 <rect x="9.5" y="12.3" width="3.9" height="9.2" fill="#fff" stroke="#777" stroke-width="1.1"/>
 <rect x="13.4" y="7.4" width="4.1" height="14.1" fill="#dadada" stroke="#777" stroke-width="1.1"/>
 <rect x="19.4" y="11.4" width="4" height="10.1" fill="#fff" stroke="#777" stroke-width="1.1"/>
 <rect x="23.4" y="14.3" width="4" height="7.2" fill="#dadada" stroke="#777" stroke-width="1.1"/>
</svg>
<div class="t rl" style="left:947px;top:108px">Переместить</div>
<div class="t rl" style="left:953px;top:124px">диаграмму</div>
<div class="t gl" style="left:943px">Расположение</div>
<div class="vsep" style="left:1029px"></div>
<svg class="a" style="left:1045px;top:145px" width="14" height="9" viewBox="0 0 14 9"><path d="M2.3 7.7l5.3-5 5.3 5" fill="none" stroke="#444" stroke-width="1.1"/></svg>
</body></html>
